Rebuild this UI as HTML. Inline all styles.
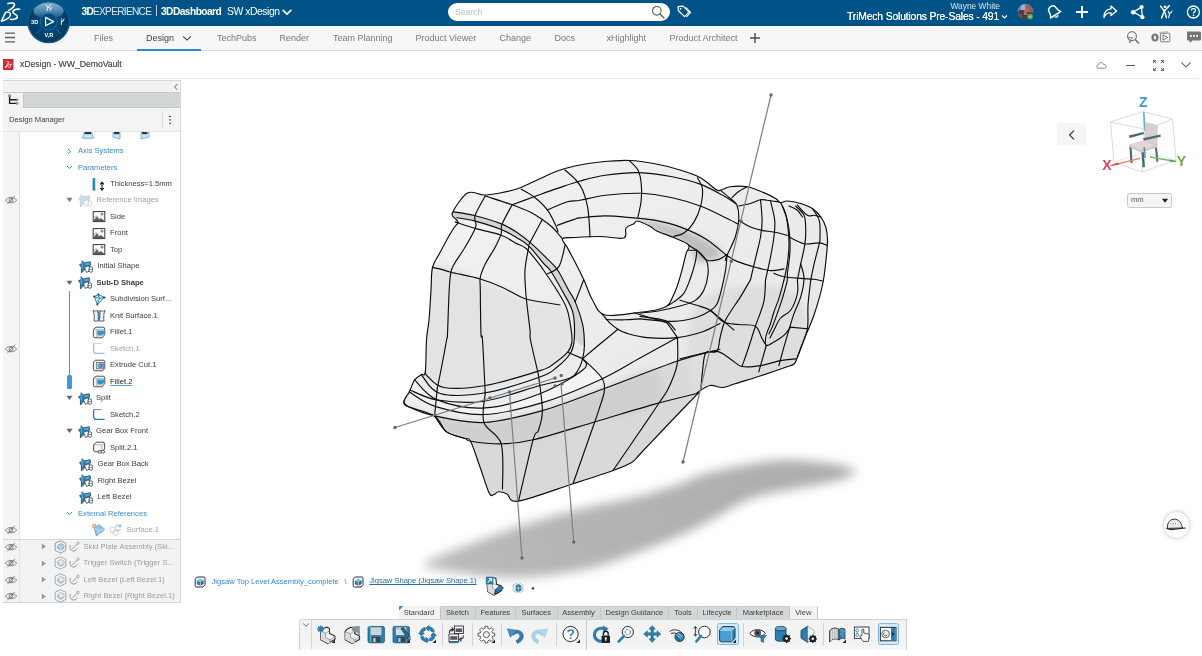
<!DOCTYPE html>
<html><head><meta charset="utf-8"><title>xDesign</title>
<style>
*{box-sizing:border-box;margin:0;padding:0}
body{opacity:.9999}
html,body{width:1202px;height:656px;overflow:hidden;background:#fff;font-family:"Liberation Sans",sans-serif;color:#3d3d3d}
.abs{position:absolute}
#topbar{position:absolute;left:0;top:0;width:1202px;height:26px;background:#005386}
#tabbar{position:absolute;left:0;top:26px;width:1202px;height:25px;background:#f7f7f7;border-bottom:1px solid #dcdcdc}
.tab{position:absolute;top:0;height:24px;line-height:24px;font-size:9px;color:#77797c;white-space:nowrap}
.tab.act{color:#3d3d3d}
#whead{position:absolute;left:0;top:51px;width:1202px;height:27px;background:#fff}
#panel{position:absolute;left:3px;top:80px;width:178px;height:523px;background:#fff;border:1px solid #d4d7d8;border-left:none}
.row{position:absolute;left:0;height:16px;line-height:16px;font-size:7.62px;white-space:nowrap;color:#3d3d3d}
.blue{color:#368ec4}
.gray{color:#a3a3a3}
.gray2{color:#9a9c9e}
</style></head><body>
<div id="topbar">
<svg class="abs" style="left:0;top:0" width="26" height="26" viewBox="0 0 26 26"><g fill="none" stroke="#fff" stroke-linecap="round" stroke-linejoin="round"><path d="M8 3.6 C10.6 2.6 15.2 2.6 14.4 5.2 C13.8 7.2 11.2 9 8.6 10.4" stroke-width="1.6"/><path d="M5.6 12.4 C9 11.4 11.2 12.8 10.4 15.2 C9.6 17.8 5.2 20.4 1.4 21.2 C3 18 4.4 15 5.6 12.4Z" stroke-width="1.5"/><path d="M19.6 9.3 C16 8.6 12.4 10 13 12.2 C13.6 14.2 17.8 14.8 17.4 17 C17 19 13.4 19.8 10.6 19.3" stroke-width="1.6"/></g></svg>
<svg class="abs" style="left:25px;top:-3px;z-index:5" width="48" height="50" viewBox="0 0 48 50">
<defs><radialGradient id="cg" cx="50%" cy="45%" r="55%"><stop offset="0" stop-color="#024e7e"/><stop offset="0.7" stop-color="#01426c"/><stop offset="1" stop-color="#013a60"/></radialGradient>
<linearGradient id="cg2" x1="0" y1="0" x2="0" y2="1"><stop offset="0" stop-color="#86b2d2"/><stop offset=".55" stop-color="#4f87ad"/><stop offset="1" stop-color="#1f5f8a" stop-opacity=".6"/></linearGradient>
<clipPath id="ccl"><circle cx="23.6" cy="24.9" r="19.6"/></clipPath></defs>
<circle cx="23.6" cy="24.9" r="21.4" fill="#0a5a8e"/>
<circle cx="23.6" cy="24.9" r="20" fill="url(#cg)"/>
<ellipse cx="23.6" cy="13.6" rx="15" ry="8.4" fill="url(#cg2)" clip-path="url(#ccl)"/>
<circle cx="23.6" cy="24.6" r="8.4" fill="#014a78" stroke="#1178b4" stroke-width=".7"/>
<g stroke="#1f86c4" stroke-width=".7"><path d="M11.4 12 L15.8 16.6"/><path d="M35.8 12 L31.4 16.6"/><path d="M11.4 36.8 L15.8 32.4"/><path d="M35.8 36.8 L31.4 32.4"/></g>
<path d="M20.6 20.4 L28.6 24.6 L20.6 28.8Z" fill="none" stroke="#fff" stroke-width="1.2" stroke-linejoin="round"/>
<g fill="#fff" font-family="Liberation Sans,sans-serif" font-weight="700" font-size="5.6px" text-anchor="middle"><text x="9.6" y="26.8">3D</text><text x="23.8" y="39.8">V,R</text></g>
<g stroke="#fff" stroke-width="1" fill="none" stroke-linecap="round"><path d="M21.4 8.2 L23 10.8 L25.4 7.8"/><path d="M23 10.8 L22 13.4"/><path d="M24.6 10.6 L25.6 12.4 L27 10.2 M25.6 12.4 L25 13.6" stroke-width=".8"/><path d="M36.4 23.4 L36.4 27.4 M37.6 24.6 L39 22"/></g>
<circle cx="36.4" cy="21.8" r=".6" fill="#fff"/>
</svg>
<div class="tt abs" style="left:81.5px;top:5px;font-size:10.2px;line-height:14px;color:#fff;white-space:nowrap;letter-spacing:-.75px"><b>3D</b><span style="opacity:.86">EXPERIENCE</span></div>
<div class="abs" style="left:155.5px;top:5px;width:1px;height:11px;background:#b9cfdf"></div>
<div class="tt abs" style="left:161px;top:5px;font-size:10.2px;line-height:14px;color:#fff;white-space:nowrap;letter-spacing:-.55px"><b>3DDashboard</b></div>
<div class="tt abs" style="left:227px;top:5px;font-size:10.4px;line-height:14px;color:#fff;white-space:nowrap;letter-spacing:-.46px">SW xDesign</div>
<svg class="abs" style="left:282px;top:9px" width="10" height="7" viewBox="0 0 10 7"><path d="M1.2 1.4 L5 5.2 L8.8 1.4" fill="none" stroke="#fff" stroke-width="1.7" stroke-linecap="round" stroke-linejoin="round"/></svg>
<div class="abs" style="left:448px;top:3px;width:222px;height:18px;border-radius:9px;background:#fff"></div>
<div class="abs" style="left:455px;top:5px;font-size:8.6px;line-height:14px;color:#b4bcc2">Search</div>
<svg class="abs" style="left:650px;top:4px" width="16" height="16" viewBox="0 0 16 16"><circle cx="6.8" cy="6.8" r="4.3" fill="none" stroke="#5b5d5e" stroke-width="1.1"/><path d="M10 10 L14 14" stroke="#5b5d5e" stroke-width="1.3" stroke-linecap="round"/></svg>
<svg class="abs" style="left:676px;top:4px" width="16" height="16" viewBox="0 0 16 16"><g fill="none" stroke="#fff" stroke-width="1.2" stroke-linejoin="round"><path d="M2 2.6 L7 2.2 L13 8.2 L8.6 12.6 L2.4 6.8Z"/><path d="M9.6 3.4 L14.6 8.4 L10.4 12.8"/></g><circle cx="4.6" cy="4.8" r=".9" fill="#fff"/></svg>
<div class="abs" style="right:202px;top:0px;font-size:8.4px;line-height:12px;color:#dbe6ee;white-space:nowrap">Wayne White</div>
<div class="abs" style="right:203px;top:9.5px;font-size:10.4px;line-height:14px;color:#fff;white-space:nowrap;letter-spacing:-.18px;text-shadow:0 0 .4px #fff">TriMech Solutions Pre-Sales - 491</div>
<svg class="abs" style="left:1001px;top:14px" width="7" height="6" viewBox="0 0 7 6"><path d="M1 1.5 L3.5 4 L6 1.5" fill="none" stroke="#fff" stroke-width="1.1"/></svg>
<svg class="abs" style="left:1016px;top:2px" width="20" height="20" viewBox="0 0 20 20"><defs><clipPath id="avc"><circle cx="9.6" cy="9.8" r="8"/></clipPath></defs><circle cx="9.6" cy="9.8" r="8" fill="#4a5a70"/><g clip-path="url(#avc)"><rect x="0" y="0" width="10" height="9" fill="#6f8aa6"/><rect x="10" y="1" width="9" height="9" fill="#7d6a72"/><rect x="3" y="8" width="8" height="11" fill="#3e4250"/><rect x="8" y="6" width="5" height="7" fill="#b06a5a"/><rect x="11" y="10" width="8" height="9" fill="#5a4650"/><rect x="5" y="3" width="4" height="5" fill="#9fb1c4"/><rect x="2" y="12" width="4" height="6" fill="#7a4a48"/></g><circle cx="14.2" cy="14.6" r="2.7" fill="#55b25b"/><path d="M12.9 14.6 L13.9 15.6 L15.6 13.7" fill="none" stroke="#d8f0d8" stroke-width=".7"/></svg>
<svg class="abs" style="left:1045px;top:3px" width="18" height="18" viewBox="0 0 18 18"><g transform="rotate(-32 9 9)" fill="none" stroke="#fff" stroke-linejoin="round"><path d="M9 2.6 C6 2.6 4.8 5 4.8 7.6 C4.8 10 3.8 11.2 2.8 12.2 H15.2 C14.2 11.2 13.2 10 13.2 7.6 C13.2 5 12 2.6 9 2.6Z" stroke-width="1.5"/><path d="M7.2 13.4 A1.9 1.9 0 0 0 10.8 13.4" stroke-width="1.3"/></g></svg>
<svg class="abs" style="left:1074px;top:4px" width="16" height="16" viewBox="0 0 16 16"><path d="M8 2 V14 M2 8 H14" stroke="#fff" stroke-width="1.9"/></svg>
<svg class="abs" style="left:1101px;top:3px" width="18" height="18" viewBox="0 0 18 18"><path d="M10 3 L15.6 8 L10 12.6 V10 C6.6 9.6 4.2 11.4 3 14.6 C2.6 9.6 5.4 6 10 5.8Z" fill="none" stroke="#fff" stroke-width="1.3" stroke-linejoin="round"/></svg>
<svg class="abs" style="left:1129px;top:3px" width="18" height="18" viewBox="0 0 18 18"><g stroke="#fff" stroke-width="1.3" fill="none"><path d="M4.4 9 L12.4 4.2 L13.4 14 Z"/></g><circle cx="4.2" cy="9.2" r="2.3" fill="#fff"/><circle cx="12.6" cy="4" r="2.1" fill="#fff"/><circle cx="13.4" cy="14.2" r="2.1" fill="#fff"/></svg>
<svg class="abs" style="left:1157px;top:3px" width="18" height="18" viewBox="0 0 18 18"><g stroke="#fff" stroke-width="1.5" fill="none" stroke-linecap="round"><path d="M3.6 3.2 L7.4 8 L12.4 2.6"/><path d="M7.4 8 L4.6 15"/><path d="M8 9.4 L9.4 14.6"/><path d="M11.2 8.6 L12.6 10.8 L15 8.4 M12.6 10.8 L11.6 14.6" stroke-width="1.1"/></g><circle cx="8" cy="3.8" r="1.3" fill="#fff"/></svg>
<svg class="abs" style="left:1185px;top:3px" width="18" height="18" viewBox="0 0 18 18"><circle cx="8.4" cy="9" r="6" fill="none" stroke="#fff" stroke-width="1.3"/><path d="M6.4 7.4 C6.4 5 10.6 5 10.6 7.4 C10.6 8.8 8.5 8.9 8.5 10.6" fill="none" stroke="#fff" stroke-width="1.3"/><circle cx="8.5" cy="12.3" r=".85" fill="#fff"/></svg>

</div>

<div id="tabbar">
<svg class="abs" style="left:4px;top:5px" width="12" height="13" viewBox="0 0 12 13"><path d="M1 2.2 H11 M1 6.5 H11 M1 10.8 H11" stroke="#5a5c5e" stroke-width="1.3"/></svg>
<div class="tab" style="left:94px">Files</div>
<div class="tab act" style="left:146px">Design</div>
<svg class="abs" style="left:182px;top:9px" width="10" height="7" viewBox="0 0 10 7"><path d="M1 1.4 L5 5 L9 1.4" fill="none" stroke="#4a4c4e" stroke-width="1.1"/></svg>
<div class="abs" style="left:137px;top:23px;width:64px;height:2px;background:#2b89cc"></div>
<div class="tab" style="left:217px">TechPubs</div>
<div class="tab" style="left:279.5px">Render</div>
<div class="tab" style="left:333px">Team Planning</div>
<div class="tab" style="left:415.5px">Product Viewer</div>
<div class="tab" style="left:499.5px">Change</div>
<div class="tab" style="left:554.5px">Docs</div>
<div class="tab" style="left:606.5px">xHighlight</div>
<div class="tab" style="left:669.5px">Product Architect</div>
<svg class="abs" style="left:749px;top:6px" width="12" height="12" viewBox="0 0 12 12"><path d="M6 1 V11 M1 6 H11" stroke="#4a4c4e" stroke-width="1.4"/></svg>
<svg class="abs" style="left:1124px;top:3px" width="18" height="18" viewBox="0 0 18 18"><circle cx="8" cy="7.2" r="4.4" fill="none" stroke="#6a6c6e" stroke-width="1.1"/><path d="M11.2 10.4 L15 14.4" stroke="#6a6c6e" stroke-width="1.5"/><path d="M3.6 8.6 H8.4 L6.6 10.6 V13.4 L5.4 13.4 V10.6Z" fill="#f7f7f7" stroke="#6a6c6e" stroke-width=".8"/></svg>
<svg class="abs" style="left:1150px;top:3px" width="24" height="18" viewBox="0 0 24 18"><ellipse cx="5" cy="8.6" rx="3.6" ry="4" fill="#77797b"/><ellipse cx="5" cy="8.6" rx="1" ry="2.2" fill="#f7f7f7"/><rect x="10.4" y="4.2" width="9.4" height="8.6" rx="1" fill="#f7f7f7" stroke="#77797b" stroke-width="1"/><path d="M9 3.4 L18 2.8" stroke="#9a9c9e" stroke-width=".8"/><path d="M13 5.8 L17.6 8.5 L13 11.2Z" fill="none" stroke="#77797b" stroke-width="1"/></svg>
<svg class="abs" style="left:1185px;top:4px" width="18" height="16" viewBox="0 0 18 16"><path d="M2 1.6 H15 Q16 1.6 16 2.6 V9.4 Q16 10.4 15 10.4 H7.4 L4.6 13.2 V10.4 H3 Q2 10.4 2 9.4Z" fill="#737577"/><g fill="#f7f7f7"><rect x="5" y="5" width="1.8" height="1.8"/><rect x="8.1" y="5" width="1.8" height="1.8"/><rect x="11.2" y="5" width="1.8" height="1.8"/></g></svg>
</div>
<div id="whead">
<svg class="abs" style="left:3px;top:8px" width="11" height="12" viewBox="0 0 11 12"><rect x="0" y="0" width="10.4" height="11" fill="#d8262c"/><g fill="none" stroke="#fff" stroke-width=".9" stroke-linecap="round"><path d="M4 2.6 C6 2 6.6 3.2 5 4.6"/><path d="M5 4.6 C6.6 4.4 6 6 4.6 7 L2 8.8 L5 4.6"/><path d="M8.6 5.2 C7.4 4.8 6.8 5.6 7.4 6.4 C8 7.2 7.8 8.2 5.8 8.2"/></g></svg>
<div class="abs" style="left:20px;top:6px;font-size:8.7px;line-height:14px;color:#5b5d5f;white-space:nowrap;letter-spacing:-.05px;text-shadow:0 0 .3px #5b5d5f" id="wt">xDesign - WW_DemoVault</div>
<svg class="abs" style="left:1095px;top:8px" width="14" height="12" viewBox="0 0 14 12"><path d="M3.4 9.2 C1 9.2 1 6.4 3.2 6.2 C3.6 3 8 2.6 8.8 5.6 C11.6 5.4 12 9.2 9.6 9.2Z" fill="none" stroke="#77797b" stroke-width=".9"/></svg>
<div class="abs" style="left:1126px;top:13.5px;width:9px;height:1.2px;background:#5a5c5e"></div>
<svg class="abs" style="left:1152px;top:8px" width="13" height="13" viewBox="0 0 13 13"><g stroke="#5a5c5e" stroke-width="1" fill="none"><path d="M1.6 4 V1.6 H4 M1.6 1.6 L4.2 4.2"/><path d="M9 1.6 H11.4 V4 M11.4 1.6 L8.8 4.2"/><path d="M1.6 9 V11.4 H4 M1.6 11.4 L4.2 8.8"/><path d="M9 11.4 H11.4 V9 M11.4 11.4 L8.8 8.8"/></g></svg>
<svg class="abs" style="left:1180px;top:10px" width="12" height="8" viewBox="0 0 12 8"><path d="M1.4 1.6 L6 5.8 L10.6 1.6" fill="none" stroke="#5a5c5e" stroke-width="1.1"/></svg>
<div class="abs" style="left:3px;top:27px;width:1196px;height:1px;background:#ebebeb"></div>
</div>
<!--PANEL--><svg width="0" height="0" style="position:absolute"><defs>
<symbol id="i-feat" viewBox="0 0 14 14"><path d="M.5 4.6 L2.8 3.9 L3.2 .7 L5.2 3 L11.2 1.7 L11.6 5 L9.4 7 L6 9 L4.8 10.6 L2.4 13 L2.4 7.4Z" fill="#2b7fb2" stroke="#1d4a68" stroke-width=".8" stroke-linejoin="round"/><path d="M3.3 1.8 V8.4" stroke="#6fb6de" stroke-width=".9"/><path d="M5.8 3.6 L10.6 2.5 L10.9 4.6 L7.6 5.6Z" fill="#58a8d8"/><path d="M5.4 7.6 L8 6.2 L10.6 6 L10 11.2 L7.6 12.4Z" fill="#fff" stroke="#2b3a44" stroke-width=".8" stroke-linejoin="round"/><rect x="10.2" y="6.8" width="3.4" height="5.4" rx="1.5" fill="#fff" stroke="#2b3a44" stroke-width=".8"/><path d="M10.6 9.4 H13" stroke="#2b3a44" stroke-width=".6"/></symbol>
<symbol id="i-featg" viewBox="0 0 14 14"><g opacity=".42"><path d="M.5 4.6 L2.8 3.9 L3.2 .7 L5.2 3 L11.2 1.7 L11.6 5 L9.4 7 L6 9 L4.8 10.6 L2.4 13 L2.4 7.4Z" fill="#7fb0d0" stroke="#6b8496" stroke-width=".8" stroke-linejoin="round"/><path d="M5.4 7.6 L8 6.2 L10.6 6 L10 11.2 L7.6 12.4Z" fill="#fff" stroke="#7a848a" stroke-width=".8"/><rect x="10.2" y="6.8" width="3.4" height="5.4" rx="1.5" fill="#fff" stroke="#7a848a" stroke-width=".8"/></g></symbol>
<symbol id="i-subd" viewBox="0 0 14 13"><path d="M2.2 3.6 L6.4 1.4 L12.4 4.4 L5.4 11.4Z" fill="#d9ecf6" stroke="#2e82b4" stroke-width="1"/><path d="M2.2 3.6 L7.4 5.4 L12.4 4.4 M6.4 1.4 L7.4 5.4 L5.4 11.4" fill="none" stroke="#2e82b4" stroke-width=".9"/><g fill="#2b3a44"><circle cx="2.2" cy="3.6" r="1"/><circle cx="6.4" cy="1.4" r="1"/><circle cx="12.4" cy="4.4" r="1"/><circle cx="5.4" cy="11.4" r="1"/></g></symbol>
<symbol id="i-knit" viewBox="0 0 14 13"><path d="M1 1.4 C2.6 2.4 4.4 2.4 6 1.4 L6.6 12 H2 C2.6 8 2.4 5 1 1.4Z" fill="#f2f2f2" stroke="#3a3f44" stroke-width=".8"/><path d="M13 1.4 C11.4 2.4 9.6 2.4 8 1.4 L7.4 12 H12 C11.4 8 11.6 5 13 1.4Z" fill="#f2f2f2" stroke="#3a3f44" stroke-width=".8"/><path d="M7.6 2 L6 3.6 L8 5 L6 6.6 L8 8 L6 9.6 L7.6 11.4" fill="none" stroke="#2e82b4" stroke-width="1.1"/></symbol>
<symbol id="i-fillet" viewBox="0 0 14 13"><path d="M1.4 3.4 L4 1.2 H11 Q12.8 1.2 12.8 3 V8.4 L10.2 11.8 H3 Q1.4 11.8 1.4 10.2Z" fill="#f4f4f4" stroke="#3a3f44" stroke-width=".9" stroke-linejoin="round"/><path d="M5.2 3.6 H11 Q12.2 3.6 12.2 4.8 V7.6 L10.6 9.2 H6.4 Q5.2 9.2 5.2 8Z" fill="#3b93c6"/><path d="M5.2 3.6 H11 Q12.2 3.6 12.2 4.6 V5 H5.2Z" fill="#8fcdee"/><path d="M1.6 3.6 H4.8 V10.6 M4.8 10.6 L3.4 11.6 M5 9.8 H10.4" fill="none" stroke="#8a8f94" stroke-width=".6"/></symbol>
<symbol id="i-sketch" viewBox="0 0 14 13"><path d="M1.6 1.6 V8.4 Q1.6 11.4 4.6 11.4 H12.6" fill="none" stroke="#2f7fae" stroke-width="1.3"/><path d="M1.6 1.6 H9.6" stroke="#2f7fae" stroke-width=".8"/></symbol>
<symbol id="i-sketchg" viewBox="0 0 14 13"><path d="M1.6 1.6 V8.4 Q1.6 11.4 4.6 11.4 H12.6" fill="none" stroke="#93c1e2" stroke-width="1.3"/><path d="M1.6 1.6 H9.6" stroke="#a9cde8" stroke-width=".8"/></symbol>
<symbol id="i-cut" viewBox="0 0 14 13"><path d="M1.4 3 L3.6 1.2 H11.2 Q12.8 1.2 12.8 2.8 V9.4 L10.6 11.8 H3 Q1.4 11.8 1.4 10.2Z" fill="#f0f0f0" stroke="#3a3f44" stroke-width=".9" stroke-linejoin="round"/><rect x="4.6" y="3.4" width="7" height="6.4" fill="#c9ccce" stroke="#55595d" stroke-width=".6"/><path d="M7 4.6 H10.6 V8.8 H7 L5.8 6.8Z" fill="#2e82b4"/><path d="M6 6.2 L8.4 6 L8.4 7.6Z" fill="#cfe6f3"/></symbol>
<symbol id="i-split" viewBox="0 0 14 13"><path d="M1.6 3.6 L4.6 1.2 H11 Q12.6 1.2 12.6 2.8 V8 L9.8 10.8 H3.2 Q1.6 10.8 1.6 9.2Z" fill="#f6f6f6" stroke="#3a3f44" stroke-width=".9" stroke-linejoin="round"/><path d="M1.8 3.8 H8.6 Q9.8 3.8 9.8 5 V10.6 M9.8 4.4 L12.4 2" fill="none" stroke="#8a8f93" stroke-width=".6"/><rect x="6.2" y="9.4" width="3.6" height="2.6" rx="1.3" fill="#fff" stroke="#24282b" stroke-width=".8"/><rect x="9" y="9.4" width="3.6" height="2.6" rx="1.3" fill="#fff" stroke="#24282b" stroke-width=".8"/></symbol>
<symbol id="i-img" viewBox="0 0 14 13"><rect x="1.2" y="1.6" width="11.6" height="10" fill="#fdfdfd" stroke="#33373a" stroke-width="1"/><path d="M1.8 10 L4.8 6.6 L7.2 9.2 L8.8 8 L12.2 10.6 V11 H1.8Z" fill="#5a5f63"/><path d="M1.8 8.2 L4.4 5.8 L6.6 8" fill="none" stroke="#6a6f73" stroke-width=".6"/><circle cx="10" cy="4.2" r="1" fill="none" stroke="#33373a" stroke-width=".7"/></symbol>
<symbol id="i-param" viewBox="0 0 14 13"><rect x=".6" y=".2" width="2.6" height="12.4" fill="#2e82b4"/><path d="M3.2 1 H6.4 M3.2 12 H6.4" stroke="#9aa0a4" stroke-width=".6" stroke-dasharray="1 .8"/><path d="M4.6 3.6 H5.6 M4.6 6.2 H5.6" stroke="#c0c4c7" stroke-width=".6"/><path d="M10 4.4 V12 M8.2 6.4 L10 4.2 L11.8 6.4 M8.2 10 L10 12.2 L11.8 10" fill="none" stroke="#1f2326" stroke-width="1.1"/></symbol>
<symbol id="i-eye" viewBox="0 0 14 10"><path d="M1.4 5.2 C3.6 1.6 10.4 1.6 12.6 5.2 C10.4 8.6 3.6 8.6 1.4 5.2Z" fill="none" stroke="#6e7174" stroke-width=".85"/><circle cx="7" cy="5.1" r="1.9" fill="none" stroke="#6e7174" stroke-width=".85"/><path d="M3.4 9.2 L10.8 .8" stroke="#6e7174" stroke-width=".85"/></symbol>
<symbol id="i-prod" viewBox="0 0 13 14"><path d="M6.4 .8 L11.8 3.2 V10.4 L6.4 13.2 L1.2 10.4 V3.2Z" fill="#f4f5f6" stroke="#8b9094" stroke-width=".9" stroke-linejoin="round"/><path d="M3.6 5 L6.8 3.4 L10 5 V8.6 L6.8 10.4 L3.6 8.6Z" fill="#9fc6dd" stroke="#8b9094" stroke-width=".5"/><path d="M3.6 5 L6.8 6.6 L10 5 M6.8 6.6 V10.4" fill="none" stroke="#e8f2f8" stroke-width=".6"/></symbol>
<symbol id="i-prodg" viewBox="0 0 13 14"><path d="M6.4 .8 L11.8 3.2 V10.4 L6.4 13.2 L1.2 10.4 V3.2Z" fill="#f4f5f6" stroke="#9a9ea1" stroke-width=".9" stroke-linejoin="round"/><path d="M3.6 5 L6.8 3.4 L10 5 V8.6 L6.8 10.4 L3.6 8.6Z" fill="#dfe8ee" stroke="#9a9ea1" stroke-width=".6"/><path d="M5.4 6 A2 2 0 1 0 8.6 7.8" fill="none" stroke="#9a9ea1" stroke-width=".8"/></symbol>
<symbol id="i-link" viewBox="0 0 12 12"><path d="M2.2 4.2 C1.4 7.4 3 10 5.8 10 C7.6 10 8.8 8.8 9 7.4" fill="none" stroke="#909498" stroke-width="1"/><path d="M4.4 8 L9.2 3.2" stroke="#909498" stroke-width="1"/><circle cx="10" cy="2.2" r="1.2" fill="none" stroke="#909498" stroke-width=".7"/></symbol>
<symbol id="i-plane" viewBox="0 0 14 10"><path d="M3 1 H11 L13 8.6 H1Z" fill="#cfe6f5" stroke="#4d9fd0" stroke-width=".7"/></symbol>
</defs></svg>
<div id="panel">
<div class="abs" style="left:0;top:0;width:177px;height:11px;background:#f3f3f3"></div>
<svg class="abs" style="left:170px;top:2px" width="6" height="8" viewBox="0 0 6 8"><path d="M4.4 1 L1.6 4 L4.4 7" fill="none" stroke="#55585a" stroke-width=".9"/></svg>
<div class="abs" style="left:0;top:11px;width:177px;height:16px;background:#d2d6d7;border-top:1px solid #c6cacb;border-bottom:1px solid #c6cacb"></div>
<div class="abs" style="left:0;top:11px;width:21px;height:16px;background:#f3f3f3;border-top:1px solid #c6cacb;border-right:1px solid #c6cacb"></div>
<svg class="abs" style="left:4px;top:13px" width="12" height="12" viewBox="0 0 12 12"><path d="M2.6 2.4 V9.4 H9.6 M2.6 5.8 H9.6" fill="none" stroke="#222" stroke-width="1.4"/><circle cx="2.6" cy="1.8" r="1.1" fill="#fff" stroke="#222" stroke-width=".7"/><circle cx="10" cy="5.8" r=".9" fill="#fff" stroke="#222" stroke-width=".6"/><circle cx="10" cy="9.4" r=".9" fill="#fff" stroke="#222" stroke-width=".6"/></svg>
<div class="abs" style="left:0;top:27px;width:177px;height:24px;background:#f4f4f4;border-bottom:1px solid #e4e4e4;z-index:3"></div>
<div class="row" style="left:6px;top:31px;color:#3d3d3d;z-index:4" id="dm">Design Manager</div>
<div class="abs" style="left:158.5px;top:30px;width:1px;height:17px;background:#dcdcdc;z-index:4"></div>
<div class="abs" style="left:166.2px;top:34.6px;width:1.6px;height:1.6px;background:#444;box-shadow:0 3.4px 0 #444,0 6.8px 0 #444;z-index:4"></div>
<div class="abs" style="left:0;top:51px;width:17px;height:470px;background:#f5f5f5;border-right:1px solid #e2e2e2"></div>
<div class="abs" style="left:0;top:458px;width:177px;height:63px;background:#f1f3f4;border-top:1px solid #d4d7d8"></div>
<div class="abs" style="left:16px;top:458px;width:1px;height:63px;background:#e2e4e5"></div>
<div class="abs" style="left:66px;top:210px;width:1.4px;height:85px;background:#3e97d6"></div>
<div class="abs" style="left:64.4px;top:294px;width:4.6px;height:14px;border-radius:1.5px;background:#3e97d6"></div>
<svg class="abs" style="left:78px;top:48px" width="14" height="10" viewBox="0 0 14 10"><path d="M3.4 3 H10.6 L12.6 9.2 H1.4Z" fill="#cfe6f5" stroke="#4d9fd0" stroke-width=".7"/><rect x="3.6" y="3" width="6.6" height="2.2" fill="#2b3a44"/></svg>
<svg class="abs" style="left:108px;top:48px" width="12" height="12" viewBox="0 0 12 12"><path d="M2 3 L9 3 V10 L2 8Z" fill="#cfe6f5" stroke="#4d9fd0" stroke-width=".7"/><rect x="3" y="3" width="5.4" height="2.2" fill="#2b3a44"/></svg>
<svg class="abs" style="left:136px;top:48px" width="12" height="12" viewBox="0 0 12 12"><path d="M2 3 L10 3 V8 L2 10Z" fill="#cfe6f5" stroke="#4d9fd0" stroke-width=".7"/><rect x="3" y="3" width="5.4" height="2.2" fill="#2b3a44"/></svg>
<svg class="abs" style="left:63.0px;top:66.5px" width="7" height="7" viewBox="0 0 7 7"><path d="M2 1 L4.6 3.5 L2 6" fill="none" stroke="#368ec4" stroke-width="1"/></svg>
<div class="row blue" style="left:75.0px;top:62.0px;">Axis Systems</div>
<svg class="abs" style="left:63.0px;top:83.0px" width="7" height="7" viewBox="0 0 7 7"><path d="M1 2 L3.5 4.4 L6 2" fill="none" stroke="#368ec4" stroke-width="1"/></svg>
<div class="row blue" style="left:75.0px;top:78.5px;">Parameters</div>
<svg class="abs" style="left:89.0px;top:96.5px" width="14" height="13"><use href="#i-param"/></svg>
<div class="row " style="left:107.0px;top:95.0px;">Thickness=1.5mm</div>
<svg class="abs" style="left:63.0px;top:116.4px" width="7" height="6" viewBox="0 0 7 6"><path d="M.4 .8 H6.6 L3.5 5Z" fill="#77797c"/></svg>
<svg class="abs" style="left:74.7px;top:112.8px" width="14" height="14"><use href="#i-featg"/></svg>
<div class="row gray" style="left:93.5px;top:111.4px;">Reference Images</div>
<svg class="abs" style="left:1.0px;top:114.4px" width="14" height="10"><use href="#i-eye"/></svg>
<svg class="abs" style="left:89.0px;top:129.4px" width="14" height="13"><use href="#i-img"/></svg>
<div class="row " style="left:107.0px;top:127.9px;">Side</div>
<svg class="abs" style="left:89.0px;top:145.9px" width="14" height="13"><use href="#i-img"/></svg>
<div class="row " style="left:107.0px;top:144.4px;">Front</div>
<svg class="abs" style="left:89.0px;top:162.4px" width="14" height="13"><use href="#i-img"/></svg>
<div class="row " style="left:107.0px;top:160.9px;">Top</div>
<svg class="abs" style="left:75.9px;top:178.8px" width="14" height="14"><use href="#i-feat"/></svg>
<div class="row " style="left:94.5px;top:177.4px;">Initial Shape</div>
<svg class="abs" style="left:63.0px;top:198.8px" width="7" height="6" viewBox="0 0 7 6"><path d="M.4 .8 H6.6 L3.5 5Z" fill="#66696c"/></svg>
<svg class="abs" style="left:74.7px;top:195.2px" width="14" height="14"><use href="#i-feat"/></svg>
<div class="row " style="left:93.5px;top:193.8px;"><b>Sub-D Shape</b></div>
<svg class="abs" style="left:89.0px;top:211.8px" width="14" height="13"><use href="#i-subd"/></svg>
<div class="row " style="left:107.0px;top:210.3px;">Subdivision Surf...</div>
<svg class="abs" style="left:89.0px;top:228.3px" width="14" height="13"><use href="#i-knit"/></svg>
<div class="row " style="left:107.0px;top:226.8px;">Knit Surface.1</div>
<svg class="abs" style="left:89.0px;top:244.8px" width="14" height="13"><use href="#i-fillet"/></svg>
<div class="row " style="left:107.0px;top:243.3px;">Fillet.1</div>
<svg class="abs" style="left:89.0px;top:261.3px" width="14" height="13"><use href="#i-sketchg"/></svg>
<div class="row gray" style="left:107.0px;top:259.8px;">Sketch.1</div>
<svg class="abs" style="left:1.0px;top:262.8px" width="14" height="10"><use href="#i-eye"/></svg>
<svg class="abs" style="left:89.0px;top:277.7px" width="14" height="13"><use href="#i-cut"/></svg>
<div class="row " style="left:107.0px;top:276.2px;">Extrude Cut.1</div>
<svg class="abs" style="left:89.0px;top:294.2px" width="14" height="13"><use href="#i-fillet"/></svg>
<div class="row " style="left:107.0px;top:292.7px;text-decoration:underline;text-decoration-color:#58a8e0;text-decoration-thickness:.8px;text-underline-offset:1px;color:#222">Fillet.2</div>
<svg class="abs" style="left:63.0px;top:314.2px" width="7" height="6" viewBox="0 0 7 6"><path d="M.4 .8 H6.6 L3.5 5Z" fill="#66696c"/></svg>
<svg class="abs" style="left:74.7px;top:310.6px" width="14" height="14"><use href="#i-feat"/></svg>
<div class="row " style="left:93.0px;top:309.2px;">Split</div>
<svg class="abs" style="left:89.0px;top:327.2px" width="14" height="13"><use href="#i-sketch"/></svg>
<div class="row " style="left:107.0px;top:325.7px;">Sketch.2</div>
<svg class="abs" style="left:63.0px;top:347.2px" width="7" height="6" viewBox="0 0 7 6"><path d="M.4 .8 H6.6 L3.5 5Z" fill="#66696c"/></svg>
<svg class="abs" style="left:74.7px;top:343.6px" width="14" height="14"><use href="#i-feat"/></svg>
<div class="row " style="left:93.0px;top:342.2px;">Gear Box Front</div>
<svg class="abs" style="left:89.0px;top:360.1px" width="14" height="13"><use href="#i-split"/></svg>
<div class="row " style="left:107.0px;top:358.6px;">Split.2.1</div>
<svg class="abs" style="left:75.9px;top:376.5px" width="14" height="14"><use href="#i-feat"/></svg>
<div class="row " style="left:94.5px;top:375.1px;">Gear Box Back</div>
<svg class="abs" style="left:75.9px;top:393.0px" width="14" height="14"><use href="#i-feat"/></svg>
<div class="row " style="left:94.5px;top:391.6px;">Right Bezel</div>
<svg class="abs" style="left:75.9px;top:409.5px" width="14" height="14"><use href="#i-feat"/></svg>
<div class="row " style="left:94.5px;top:408.1px;">Left Bezel</div>
<svg class="abs" style="left:63.0px;top:429.1px" width="7" height="7" viewBox="0 0 7 7"><path d="M1 2 L3.5 4.4 L6 2" fill="none" stroke="#368ec4" stroke-width="1"/></svg>
<div class="row blue" style="left:75.0px;top:424.6px;">External References</div>
<svg class="abs" style="left:1.0px;top:444.0px" width="14" height="10"><use href="#i-eye"/></svg>
<div class="row gray" style="left:123.5px;top:441.0px;">Surface.1</div>
<svg class="abs" style="left:88px;top:442.0px" width="15" height="14" viewBox="0 0 15 14"><path d="M3 4.4 L8 1.8 L14 6.4 L7.8 11 L5.4 13 Z" fill="#8cc4e4" stroke="#4a8db8" stroke-width=".6"/><path d="M3 4.4 L7.6 7.6 L7.8 11 M7.6 7.6 L14 6.4" fill="none" stroke="#e6f3fa" stroke-width=".7"/><circle cx="3" cy="2.8" r="1.7" fill="none" stroke="#e88a3c" stroke-width=".8"/><path d="M1.6 4.2 L4.6 1.2" stroke="#e88a3c" stroke-width=".8"/></svg>
<svg class="abs" style="left:105px;top:442.0px" width="14" height="14" viewBox="0 0 14 14"><circle cx="4.6" cy="7" r="2.8" fill="none" stroke="#c9ccce" stroke-width=".9"/><circle cx="7.6" cy="9.6" r="2.8" fill="none" stroke="#c9ccce" stroke-width=".9"/><path d="M7.2 4.4 A3 3 0 0 1 12.6 3.4 M12.8 1.4 V3.8 H10.4 M12.6 6 A3 3 0 0 1 8 6.6" fill="none" stroke="#7fb4d6" stroke-width="1"/></svg>
<svg class="abs" style="left:1.0px;top:460.5px" width="14" height="10"><use href="#i-eye"/></svg>
<svg class="abs" style="left:38.0px;top:462.0px" width="6" height="7" viewBox="0 0 6 7"><path d="M.8 .4 V6.6 L5 3.5Z" fill="#9a9c9e"/></svg>
<svg class="abs" style="left:50.5px;top:458.5px" width="13" height="14"><use href="#i-prod"/></svg>
<svg class="abs" style="left:65px;top:459.5px" width="12" height="12"><use href="#i-link"/></svg>
<div class="row gray2" style="left:80.5px;top:457.5px;">Skid Plate Assembly (Ski...</div>
<svg class="abs" style="left:1.0px;top:477.0px" width="14" height="10"><use href="#i-eye"/></svg>
<svg class="abs" style="left:38.0px;top:478.5px" width="6" height="7" viewBox="0 0 6 7"><path d="M.8 .4 V6.6 L5 3.5Z" fill="#9a9c9e"/></svg>
<svg class="abs" style="left:50.5px;top:475.0px" width="13" height="14"><use href="#i-prodg"/></svg>
<svg class="abs" style="left:65px;top:476.0px" width="12" height="12"><use href="#i-link"/></svg>
<div class="row gray2" style="left:80.5px;top:474.0px;">Trigger Switch (Trigger S...</div>
<svg class="abs" style="left:1.0px;top:493.5px" width="14" height="10"><use href="#i-eye"/></svg>
<svg class="abs" style="left:38.0px;top:495.0px" width="6" height="7" viewBox="0 0 6 7"><path d="M.8 .4 V6.6 L5 3.5Z" fill="#9a9c9e"/></svg>
<svg class="abs" style="left:50.5px;top:491.5px" width="13" height="14"><use href="#i-prodg"/></svg>
<svg class="abs" style="left:65px;top:492.5px" width="12" height="12"><use href="#i-link"/></svg>
<div class="row gray2" style="left:80.5px;top:490.5px;">Left Bezel (Left Bezel.1)</div>
<svg class="abs" style="left:1.0px;top:510.0px" width="14" height="10"><use href="#i-eye"/></svg>
<svg class="abs" style="left:38.0px;top:511.5px" width="6" height="7" viewBox="0 0 6 7"><path d="M.8 .4 V6.6 L5 3.5Z" fill="#9a9c9e"/></svg>
<svg class="abs" style="left:50.5px;top:508.0px" width="13" height="14"><use href="#i-prodg"/></svg>
<svg class="abs" style="left:65px;top:509.0px" width="12" height="12"><use href="#i-link"/></svg>
<div class="row gray2" style="left:80.5px;top:507.0px;">Right Bezel (Right Bezel.1)</div>
</div><!--/PANEL-->
<!--VIEW--><svg class="abs" style="left:0;top:79px" width="1202" height="577" viewBox="0 79 1202 577">
<defs><filter id="sb" x="-20%" y="-40%" width="140%" height="180%"><feGaussianBlur stdDeviation="5.5"/></filter>
<linearGradient id="bg1" x1="0" y1="0" x2="1" y2="1"><stop offset="0" stop-color="#f3f3f3"/><stop offset=".5" stop-color="#ececec"/><stop offset="1" stop-color="#e2e2e2"/></linearGradient>
<linearGradient id="shg" gradientUnits="userSpaceOnUse" x1="420" y1="570" x2="850" y2="470"><stop offset="0" stop-color="#bcbcbc"/><stop offset=".5" stop-color="#b2b2b2"/><stop offset="1" stop-color="#acacac"/></linearGradient>
<filter id="sb2"><feGaussianBlur stdDeviation="3"/></filter>
<clipPath id="bodyclip"><path d="M489.2 493.1 C486.9 488.5 483.1 475.6 480.0 467.0 C476.9 458.4 473.1 445.9 470.6 441.2 C468.1 436.4 469.2 440.1 465.2 438.5 C461.2 436.9 451.7 435.7 446.6 431.9 C441.5 428.1 441.0 420.1 434.6 415.9 C428.2 411.7 413.1 409.1 408.0 406.6 C402.9 404.2 403.8 403.6 404.0 401.2 C404.2 398.8 407.5 395.4 409.3 391.9 C411.1 388.3 412.6 382.8 414.6 379.9 C416.6 377.0 419.5 375.9 421.3 374.6 C423.1 373.3 424.4 377.8 425.3 372.0 C426.2 366.2 425.9 348.7 426.5 340.0 C427.1 331.3 428.2 328.3 429.0 320.0 C429.8 311.7 430.4 298.8 431.0 290.0 C431.6 281.2 431.0 273.8 432.5 267.5 C434.0 261.2 436.7 258.8 440.0 252.5 C443.3 246.2 449.5 235.0 452.5 230.0 C455.5 225.0 457.5 224.4 458.0 222.5 C458.5 220.6 456.4 220.4 455.5 218.8 C454.6 217.1 450.5 216.8 452.5 212.5 C454.5 208.2 462.3 195.9 467.5 193.0 C472.7 190.1 478.3 195.0 483.8 195.0 C489.2 195.0 494.4 194.0 500.0 193.0 C505.6 192.0 511.7 190.8 517.5 188.8 C523.3 186.8 528.3 184.0 535.0 181.0 C541.7 178.0 550.8 173.5 557.5 171.0 C564.2 168.5 567.9 167.5 575.0 166.0 C582.1 164.5 590.8 162.9 600.0 162.0 C609.2 161.1 620.8 160.2 630.0 160.5 C639.2 160.8 646.7 162.2 655.0 163.8 C663.3 165.3 672.5 167.7 680.0 170.0 C687.5 172.3 694.2 174.4 700.0 177.5 C705.8 180.6 711.7 186.6 715.0 188.8 C718.3 190.9 717.5 190.8 720.0 190.5 C722.5 190.2 725.5 187.4 730.0 186.8 C734.5 186.2 741.4 185.8 747.0 186.8 C752.6 187.8 759.0 190.7 763.8 192.6 C768.6 194.5 772.8 196.8 775.6 198.5 C778.4 200.2 778.7 202.3 780.6 202.7 C782.5 203.1 783.9 200.9 787.3 201.0 C790.6 201.1 796.5 202.2 800.7 203.5 C804.9 204.8 809.0 206.3 812.4 208.6 C815.8 210.8 818.6 213.9 820.8 217.0 C823.0 220.1 824.7 223.1 825.8 227.0 C826.9 230.9 827.5 234.9 827.5 240.4 C827.5 245.9 826.8 252.6 826.0 260.0 C825.2 267.4 824.5 275.8 822.5 285.0 C820.5 294.2 816.8 306.6 814.0 315.0 C811.2 323.4 808.5 328.4 805.7 335.4 C802.9 342.4 799.4 352.4 797.4 357.2 C795.4 362.0 796.1 362.3 794.0 364.0 C791.9 365.7 790.7 365.5 785.0 367.5 C779.3 369.5 768.3 373.3 760.0 376.0 C751.7 378.7 741.2 381.8 735.0 383.8 C728.8 385.7 726.7 387.2 722.5 387.5 C718.3 387.8 714.2 384.7 710.0 385.5 C705.8 386.3 699.5 391.2 697.5 392.5 C695.5 393.8 701.1 389.9 698.2 393.2 C695.3 396.4 686.4 405.4 680.0 412.0 C673.6 418.6 666.7 425.9 660.0 433.0 C653.3 440.1 644.3 449.6 639.6 454.5 C634.9 459.4 636.0 459.8 631.6 462.5 C627.2 465.2 622.8 466.9 613.0 470.5 C603.2 474.1 588.8 478.7 573.0 483.8 C557.2 488.9 529.5 499.4 518.5 501.1 C507.5 502.8 510.3 495.6 507.0 494.0 C503.7 492.4 500.7 491.7 498.5 491.8 C496.3 491.9 495.6 494.3 494.0 494.5 C492.4 494.7 491.5 497.7 489.2 493.1Z M562.5 238.8 C563.8 237.2 568.8 237.9 575.0 237.5 C581.2 237.1 591.9 236.4 600.0 236.5 C608.1 236.6 619.4 239.4 623.8 238.0 C628.1 236.6 624.3 230.4 626.0 228.0 C627.7 225.6 631.8 224.9 633.8 223.8 C635.7 222.6 634.8 220.6 637.5 221.0 C640.2 221.4 646.8 224.6 650.0 226.2 C653.2 227.9 652.9 229.0 656.8 230.9 C660.7 232.8 668.2 235.2 673.5 237.6 C678.8 240.0 686.5 242.4 688.6 245.1 C690.7 247.8 687.2 249.3 686.1 253.5 C685.0 257.7 683.4 264.7 681.9 270.3 C680.4 275.9 678.6 282.2 676.9 287.0 C675.2 291.8 673.3 295.7 671.8 298.8 C670.3 301.9 670.2 303.7 667.7 305.5 C665.2 307.3 661.4 308.6 656.8 309.7 C652.2 310.8 648.6 311.3 640.0 312.2 C631.4 313.1 612.9 317.0 605.0 315.0 C597.1 313.0 596.0 305.7 592.5 300.0 C589.0 294.3 587.1 286.9 584.2 280.6 C581.3 274.3 577.9 267.6 575.0 262.0 C572.1 256.4 569.1 250.9 567.0 247.0 C564.9 243.1 561.2 240.3 562.5 238.8Z" clip-rule="evenodd"/></clipPath></defs>
<path d="M424.0 563.8 C427.3 560.1 443.9 554.1 459.9 547.8 C475.9 541.5 500.5 532.2 519.8 525.9 C539.1 519.6 555.7 514.9 575.7 509.9 C595.7 504.9 622.3 500.2 639.6 495.9 C656.9 491.6 669.0 487.5 679.6 483.9 C690.2 480.2 693.5 477.0 703.5 474.0 C713.5 471.0 726.9 468.3 739.5 466.0 C752.1 463.7 766.1 460.7 779.4 460.0 C792.7 459.3 808.6 461.0 819.3 462.0 C829.9 463.0 837.3 464.3 843.3 466.0 C849.3 467.7 856.0 469.7 855.3 472.0 C854.6 474.3 848.6 477.4 839.3 480.0 C830.0 482.6 812.7 485.2 799.4 487.9 C786.1 490.5 770.0 492.9 759.4 495.9 C748.8 498.9 743.5 501.9 735.5 505.9 C727.5 509.9 720.8 514.9 711.5 519.9 C702.2 524.9 691.6 530.5 679.6 535.8 C667.6 541.1 652.9 546.8 639.6 551.8 C626.3 556.8 613.0 562.1 599.7 565.8 C586.4 569.5 573.0 571.8 559.7 573.8 C546.4 575.8 533.1 577.5 519.8 577.8 C506.5 578.1 493.2 577.1 479.9 575.8 C466.6 574.5 449.2 571.8 439.9 569.8 C430.6 567.8 420.7 567.5 424.0 563.8Z" fill="url(#shg)" filter="url(#sb)"/>
<path d="M489.2 493.1 C486.9 488.5 483.1 475.6 480.0 467.0 C476.9 458.4 473.1 445.9 470.6 441.2 C468.1 436.4 469.2 440.1 465.2 438.5 C461.2 436.9 451.7 435.7 446.6 431.9 C441.5 428.1 441.0 420.1 434.6 415.9 C428.2 411.7 413.1 409.1 408.0 406.6 C402.9 404.2 403.8 403.6 404.0 401.2 C404.2 398.8 407.5 395.4 409.3 391.9 C411.1 388.3 412.6 382.8 414.6 379.9 C416.6 377.0 419.5 375.9 421.3 374.6 C423.1 373.3 424.4 377.8 425.3 372.0 C426.2 366.2 425.9 348.7 426.5 340.0 C427.1 331.3 428.2 328.3 429.0 320.0 C429.8 311.7 430.4 298.8 431.0 290.0 C431.6 281.2 431.0 273.8 432.5 267.5 C434.0 261.2 436.7 258.8 440.0 252.5 C443.3 246.2 449.5 235.0 452.5 230.0 C455.5 225.0 457.5 224.4 458.0 222.5 C458.5 220.6 456.4 220.4 455.5 218.8 C454.6 217.1 450.5 216.8 452.5 212.5 C454.5 208.2 462.3 195.9 467.5 193.0 C472.7 190.1 478.3 195.0 483.8 195.0 C489.2 195.0 494.4 194.0 500.0 193.0 C505.6 192.0 511.7 190.8 517.5 188.8 C523.3 186.8 528.3 184.0 535.0 181.0 C541.7 178.0 550.8 173.5 557.5 171.0 C564.2 168.5 567.9 167.5 575.0 166.0 C582.1 164.5 590.8 162.9 600.0 162.0 C609.2 161.1 620.8 160.2 630.0 160.5 C639.2 160.8 646.7 162.2 655.0 163.8 C663.3 165.3 672.5 167.7 680.0 170.0 C687.5 172.3 694.2 174.4 700.0 177.5 C705.8 180.6 711.7 186.6 715.0 188.8 C718.3 190.9 717.5 190.8 720.0 190.5 C722.5 190.2 725.5 187.4 730.0 186.8 C734.5 186.2 741.4 185.8 747.0 186.8 C752.6 187.8 759.0 190.7 763.8 192.6 C768.6 194.5 772.8 196.8 775.6 198.5 C778.4 200.2 778.7 202.3 780.6 202.7 C782.5 203.1 783.9 200.9 787.3 201.0 C790.6 201.1 796.5 202.2 800.7 203.5 C804.9 204.8 809.0 206.3 812.4 208.6 C815.8 210.8 818.6 213.9 820.8 217.0 C823.0 220.1 824.7 223.1 825.8 227.0 C826.9 230.9 827.5 234.9 827.5 240.4 C827.5 245.9 826.8 252.6 826.0 260.0 C825.2 267.4 824.5 275.8 822.5 285.0 C820.5 294.2 816.8 306.6 814.0 315.0 C811.2 323.4 808.5 328.4 805.7 335.4 C802.9 342.4 799.4 352.4 797.4 357.2 C795.4 362.0 796.1 362.3 794.0 364.0 C791.9 365.7 790.7 365.5 785.0 367.5 C779.3 369.5 768.3 373.3 760.0 376.0 C751.7 378.7 741.2 381.8 735.0 383.8 C728.8 385.7 726.7 387.2 722.5 387.5 C718.3 387.8 714.2 384.7 710.0 385.5 C705.8 386.3 699.5 391.2 697.5 392.5 C695.5 393.8 701.1 389.9 698.2 393.2 C695.3 396.4 686.4 405.4 680.0 412.0 C673.6 418.6 666.7 425.9 660.0 433.0 C653.3 440.1 644.3 449.6 639.6 454.5 C634.9 459.4 636.0 459.8 631.6 462.5 C627.2 465.2 622.8 466.9 613.0 470.5 C603.2 474.1 588.8 478.7 573.0 483.8 C557.2 488.9 529.5 499.4 518.5 501.1 C507.5 502.8 510.3 495.6 507.0 494.0 C503.7 492.4 500.7 491.7 498.5 491.8 C496.3 491.9 495.6 494.3 494.0 494.5 C492.4 494.7 491.5 497.7 489.2 493.1Z M562.5 238.8 C563.8 237.2 568.8 237.9 575.0 237.5 C581.2 237.1 591.9 236.4 600.0 236.5 C608.1 236.6 619.4 239.4 623.8 238.0 C628.1 236.6 624.3 230.4 626.0 228.0 C627.7 225.6 631.8 224.9 633.8 223.8 C635.7 222.6 634.8 220.6 637.5 221.0 C640.2 221.4 646.8 224.6 650.0 226.2 C653.2 227.9 652.9 229.0 656.8 230.9 C660.7 232.8 668.2 235.2 673.5 237.6 C678.8 240.0 686.5 242.4 688.6 245.1 C690.7 247.8 687.2 249.3 686.1 253.5 C685.0 257.7 683.4 264.7 681.9 270.3 C680.4 275.9 678.6 282.2 676.9 287.0 C675.2 291.8 673.3 295.7 671.8 298.8 C670.3 301.9 670.2 303.7 667.7 305.5 C665.2 307.3 661.4 308.6 656.8 309.7 C652.2 310.8 648.6 311.3 640.0 312.2 C631.4 313.1 612.9 317.0 605.0 315.0 C597.1 313.0 596.0 305.7 592.5 300.0 C589.0 294.3 587.1 286.9 584.2 280.6 C581.3 274.3 577.9 267.6 575.0 262.0 C572.1 256.4 569.1 250.9 567.0 247.0 C564.9 243.1 561.2 240.3 562.5 238.8Z" fill="url(#bg1)" fill-rule="evenodd"/>
<g clip-path="url(#bodyclip)">
<path d="M404.0 401.2 C400.3 397.3 402.9 404.2 408.0 406.6 C413.1 409.1 422.0 413.2 434.6 415.9 C447.2 418.5 465.9 423.4 483.9 422.5 C501.9 421.6 522.7 416.1 542.4 410.6 C562.1 405.1 579.9 397.5 602.3 389.3 C624.7 381.1 657.3 368.0 676.9 361.3 C696.5 354.6 699.5 354.5 720.0 349.3 C740.5 344.1 780.0 324.9 800.0 330.0 C820.0 335.1 856.7 365.0 840.0 380.0 C823.3 395.0 736.7 400.0 700.0 420.0 C663.3 440.0 651.7 483.3 620.0 500.0 C588.3 516.7 535.0 525.0 510.0 520.0 C485.0 515.0 483.3 485.0 470.0 470.0 C456.7 455.0 441.0 441.5 430.0 430.0 C419.0 418.5 407.7 405.1 404.0 401.2Z" fill="#d9d9d9"/>
<path d="M408.0 406.6 C406.0 403.9 422.0 413.2 434.6 415.9 C447.2 418.5 465.9 423.4 483.9 422.5 C501.9 421.6 522.7 416.1 542.4 410.6 C562.1 405.1 583.5 396.1 602.3 389.3 C621.1 382.5 646.1 367.6 655.0 370.0 C663.9 372.4 665.3 395.4 655.6 403.9 C645.9 412.4 617.4 415.2 597.0 421.2 C576.6 427.2 549.1 436.0 533.1 439.8 C517.1 443.6 511.6 443.6 501.2 443.8 C490.8 444.0 479.7 443.2 470.6 441.2 C461.5 439.2 457.0 437.7 446.6 431.9 C436.2 426.1 410.0 409.3 408.0 406.6Z" fill="#cfcfcf" filter="url(#sb2)"/>
<path d="M409.3 391.9 C412.9 396.3 423.5 402.8 435.9 406.6 C448.3 410.4 466.1 415.2 483.9 414.5 C501.6 413.8 523.1 408.4 542.4 402.6 C561.7 396.8 592.8 385.4 599.7 379.9 C606.6 374.3 593.5 367.1 583.7 369.3 C573.9 371.5 557.5 386.8 541.1 393.2 C524.7 399.6 502.5 406.8 485.2 407.9 C467.9 409.0 449.1 404.6 437.3 399.9 C425.5 395.2 419.3 381.2 414.6 379.9 C409.9 378.6 405.8 387.4 409.3 391.9Z" fill="#f3f3f3"/>
<path d="M453.4 211.9 C456.5 211.6 467.1 213.7 475.2 215.7 C483.3 217.7 494.7 221.1 502.0 224.1 C509.3 227.1 514.0 230.6 518.8 233.7 C523.6 236.8 525.9 238.7 530.6 242.9 C535.4 247.1 542.8 254.3 547.3 258.8 C551.8 263.3 554.1 264.8 557.6 270.0 C561.1 275.2 565.6 284.7 568.5 290.0 C571.4 295.3 572.8 296.0 575.2 301.9 C577.6 307.8 581.3 318.0 582.8 325.3 C584.3 332.6 585.8 343.5 584.4 345.5 C583.0 347.5 576.3 342.7 574.4 337.1 C572.5 331.5 574.8 319.7 572.7 311.9 C570.6 304.1 565.6 297.1 561.8 290.1 C558.0 283.1 553.0 274.4 550.0 270.0 C547.0 265.6 547.5 267.9 544.0 263.9 C540.5 259.9 533.4 250.5 528.9 246.2 C524.4 241.9 521.7 240.7 517.1 237.9 C512.5 235.1 508.2 232.3 501.2 229.5 C494.2 226.7 482.6 223.1 475.2 221.1 C467.8 219.1 460.4 219.2 456.8 217.7 C453.2 216.2 450.3 212.2 453.4 211.9Z" fill="#d4d4d4"/>
<path d="M637.0 222.0 C637.0 220.5 648.2 220.8 655.5 222.0 C662.8 223.2 672.2 226.0 680.6 229.0 C689.0 232.0 698.9 235.8 705.8 240.0 C712.7 244.2 723.0 250.3 722.0 254.0 C721.0 257.7 705.5 263.2 700.0 262.0 C694.5 260.8 693.4 251.0 689.0 247.0 C684.6 243.0 679.5 240.7 673.9 238.0 C668.3 235.3 661.6 233.7 655.5 231.0 C649.4 228.3 637.0 223.5 637.0 222.0Z" fill="#bdbdbd" filter="url(#sb2)"/>
<path d="M432.0 270.0 C441.0 254.7 464.5 275.0 480.0 280.0 C495.5 285.0 511.7 295.7 525.0 300.0 C538.3 304.3 552.2 300.2 560.0 306.0 C567.8 311.8 572.0 325.7 572.0 335.0 C572.0 344.3 574.5 352.8 560.0 362.0 C545.5 371.2 505.0 385.7 485.0 390.0 C465.0 394.3 449.8 391.0 440.0 388.0 C430.2 385.0 427.3 391.7 426.0 372.0 C424.7 352.3 423.0 285.3 432.0 270.0Z" fill="#e3e3e3" filter="url(#sb2)"/>
<path d="M700.0 300.0 C716.7 285.0 773.3 281.7 790.0 290.0 C806.7 298.3 811.7 333.3 800.0 350.0 C788.3 366.7 738.3 385.0 720.0 390.0 C701.7 395.0 693.3 395.0 690.0 380.0 C686.7 365.0 683.3 315.0 700.0 300.0Z" fill="#dedede" filter="url(#sb2)"/>
</g>
<g fill="none" stroke="#0c0c0c" stroke-width="1.15" stroke-linejoin="round" stroke-linecap="round">
<path d="M489.2 493.1 C486.9 488.5 483.1 475.6 480.0 467.0 C476.9 458.4 473.1 445.9 470.6 441.2 C468.1 436.4 469.2 440.1 465.2 438.5 C461.2 436.9 451.7 435.7 446.6 431.9 C441.5 428.1 441.0 420.1 434.6 415.9 C428.2 411.7 413.1 409.1 408.0 406.6 C402.9 404.2 403.8 403.6 404.0 401.2 C404.2 398.8 407.5 395.4 409.3 391.9 C411.1 388.3 412.6 382.8 414.6 379.9 C416.6 377.0 419.5 375.9 421.3 374.6 C423.1 373.3 424.4 377.8 425.3 372.0 C426.2 366.2 425.9 348.7 426.5 340.0 C427.1 331.3 428.2 328.3 429.0 320.0 C429.8 311.7 430.4 298.8 431.0 290.0 C431.6 281.2 431.0 273.8 432.5 267.5 C434.0 261.2 436.7 258.8 440.0 252.5 C443.3 246.2 449.5 235.0 452.5 230.0 C455.5 225.0 457.5 224.4 458.0 222.5 C458.5 220.6 456.4 220.4 455.5 218.8 C454.6 217.1 450.5 216.8 452.5 212.5 C454.5 208.2 462.3 195.9 467.5 193.0 C472.7 190.1 478.3 195.0 483.8 195.0 C489.2 195.0 494.4 194.0 500.0 193.0 C505.6 192.0 511.7 190.8 517.5 188.8 C523.3 186.8 528.3 184.0 535.0 181.0 C541.7 178.0 550.8 173.5 557.5 171.0 C564.2 168.5 567.9 167.5 575.0 166.0 C582.1 164.5 590.8 162.9 600.0 162.0 C609.2 161.1 620.8 160.2 630.0 160.5 C639.2 160.8 646.7 162.2 655.0 163.8 C663.3 165.3 672.5 167.7 680.0 170.0 C687.5 172.3 694.2 174.4 700.0 177.5 C705.8 180.6 711.7 186.6 715.0 188.8 C718.3 190.9 717.5 190.8 720.0 190.5 C722.5 190.2 725.5 187.4 730.0 186.8 C734.5 186.2 741.4 185.8 747.0 186.8 C752.6 187.8 759.0 190.7 763.8 192.6 C768.6 194.5 772.8 196.8 775.6 198.5 C778.4 200.2 778.7 202.3 780.6 202.7 C782.5 203.1 783.9 200.9 787.3 201.0 C790.6 201.1 796.5 202.2 800.7 203.5 C804.9 204.8 809.0 206.3 812.4 208.6 C815.8 210.8 818.6 213.9 820.8 217.0 C823.0 220.1 824.7 223.1 825.8 227.0 C826.9 230.9 827.5 234.9 827.5 240.4 C827.5 245.9 826.8 252.6 826.0 260.0 C825.2 267.4 824.5 275.8 822.5 285.0 C820.5 294.2 816.8 306.6 814.0 315.0 C811.2 323.4 808.5 328.4 805.7 335.4 C802.9 342.4 799.4 352.4 797.4 357.2 C795.4 362.0 796.1 362.3 794.0 364.0 C791.9 365.7 790.7 365.5 785.0 367.5 C779.3 369.5 768.3 373.3 760.0 376.0 C751.7 378.7 741.2 381.8 735.0 383.8 C728.8 385.7 726.7 387.2 722.5 387.5 C718.3 387.8 714.2 384.7 710.0 385.5 C705.8 386.3 699.5 391.2 697.5 392.5 C695.5 393.8 701.1 389.9 698.2 393.2 C695.3 396.4 686.4 405.4 680.0 412.0 C673.6 418.6 666.7 425.9 660.0 433.0 C653.3 440.1 644.3 449.6 639.6 454.5 C634.9 459.4 636.0 459.8 631.6 462.5 C627.2 465.2 622.8 466.9 613.0 470.5 C603.2 474.1 588.8 478.7 573.0 483.8 C557.2 488.9 529.5 499.4 518.5 501.1 C507.5 502.8 510.3 495.6 507.0 494.0 C503.7 492.4 500.7 491.7 498.5 491.8 C496.3 491.9 495.6 494.3 494.0 494.5 C492.4 494.7 491.5 497.7 489.2 493.1Z"/><path d="M562.5 238.8 C563.8 237.2 568.8 237.9 575.0 237.5 C581.2 237.1 591.9 236.4 600.0 236.5 C608.1 236.6 619.4 239.4 623.8 238.0 C628.1 236.6 624.3 230.4 626.0 228.0 C627.7 225.6 631.8 224.9 633.8 223.8 C635.7 222.6 634.8 220.6 637.5 221.0 C640.2 221.4 646.8 224.6 650.0 226.2 C653.2 227.9 652.9 229.0 656.8 230.9 C660.7 232.8 668.2 235.2 673.5 237.6 C678.8 240.0 686.5 242.4 688.6 245.1 C690.7 247.8 687.2 249.3 686.1 253.5 C685.0 257.7 683.4 264.7 681.9 270.3 C680.4 275.9 678.6 282.2 676.9 287.0 C675.2 291.8 673.3 295.7 671.8 298.8 C670.3 301.9 670.2 303.7 667.7 305.5 C665.2 307.3 661.4 308.6 656.8 309.7 C652.2 310.8 648.6 311.3 640.0 312.2 C631.4 313.1 612.9 317.0 605.0 315.0 C597.1 313.0 596.0 305.7 592.5 300.0 C589.0 294.3 587.1 286.9 584.2 280.6 C581.3 274.3 577.9 267.6 575.0 262.0 C572.1 256.4 569.1 250.9 567.0 247.0 C564.9 243.1 561.2 240.3 562.5 238.8Z"/>
<path d="M453.4 211.9 C457.0 212.5 467.1 213.7 475.2 215.7 C483.3 217.7 494.7 221.1 502.0 224.1 C509.3 227.1 514.0 230.6 518.8 233.7 C523.6 236.8 525.9 238.7 530.6 242.9 C535.4 247.1 542.8 254.3 547.3 258.8 C551.8 263.3 554.1 264.8 557.6 270.0 C561.1 275.2 565.6 284.7 568.5 290.0 C571.4 295.3 572.8 296.0 575.2 301.9 C577.6 307.8 581.3 318.0 582.8 325.3 C584.3 332.6 584.4 339.9 584.4 345.5 C584.4 351.1 583.6 354.7 582.6 358.6 C581.6 362.5 580.7 365.8 578.6 369.0 C576.5 372.2 576.6 375.2 570.2 378.0 C563.8 380.8 554.4 381.6 540.0 385.5 C525.6 389.4 500.8 398.8 483.8 401.2 C466.7 403.7 449.8 401.9 437.5 400.0 C425.2 398.1 414.6 391.7 410.0 390.0"/>
<path d="M456.8 217.7 C459.9 218.3 467.8 219.1 475.2 221.1 C482.6 223.1 494.2 226.7 501.2 229.5 C508.2 232.3 512.5 235.1 517.1 237.9 C521.7 240.7 524.4 241.9 528.9 246.2 C533.4 250.5 540.5 259.9 544.0 263.9 C547.5 267.9 547.0 265.6 550.0 270.0 C553.0 274.4 558.0 283.1 561.8 290.1 C565.6 297.1 570.6 304.1 572.7 311.9 C574.8 319.7 574.7 330.4 574.4 337.1 C574.1 343.8 573.9 347.2 571.0 352.2 C568.1 357.2 562.0 363.2 556.8 367.3 C551.6 371.4 551.9 372.8 540.0 377.0 C528.1 381.2 501.9 390.1 485.2 392.8 C468.5 395.6 450.6 396.5 440.0 393.5 C429.4 390.5 424.4 377.8 421.3 374.6"/>
<path d="M455.1 221.9 C458.6 223.0 468.3 226.4 476.0 228.6 C483.7 230.8 494.6 232.9 501.2 235.3 C507.8 237.7 511.3 240.7 515.5 242.9 C519.7 245.2 522.5 245.3 526.4 248.8 C530.3 252.3 536.2 260.4 539.0 263.9 C541.8 267.4 540.4 265.6 543.4 270.0 C546.4 274.4 552.9 283.7 556.8 290.1 C560.7 296.5 564.4 302.2 566.8 308.6 C569.2 315.0 570.1 323.1 571.0 328.7 C571.9 334.3 572.4 338.2 571.9 342.1 C571.4 346.0 570.8 348.6 567.7 352.2 C564.6 355.8 558.0 360.8 553.4 363.9 C548.8 367.0 551.4 367.0 540.0 370.6 C528.6 374.2 501.0 382.7 485.0 385.5 C469.0 388.3 453.3 389.0 443.8 387.5 C434.2 386.0 430.6 378.8 427.5 376.2 C424.4 373.7 425.7 372.7 425.3 372.0"/>
<path d="M485.3 195.9 C483.6 199.1 476.8 210.4 475.2 215.2 C473.6 219.9 476.1 221.9 476.0 224.4 C475.9 226.9 476.2 226.5 474.4 230.3 C472.6 234.1 468.5 241.4 465.2 247.0 C461.9 252.6 456.7 259.7 454.3 263.9 C451.9 268.1 451.8 267.8 450.9 272.2 C450.0 276.6 449.8 279.7 449.2 290.0 C448.6 300.3 447.9 325.7 447.5 334.0 C447.1 342.3 447.9 333.2 446.6 340.0 C445.4 346.8 441.6 367.0 440.0 375.0 C438.4 383.0 437.8 385.8 437.3 387.9"/>
<path d="M512.1 204.8 C510.4 208.1 503.8 219.6 502.0 224.4 C500.2 229.2 502.3 229.9 501.2 233.7 C500.1 237.5 497.9 242.0 495.3 247.0 C492.7 252.0 487.8 258.8 485.3 263.9 C482.8 268.9 481.1 272.9 480.3 277.3 C479.5 281.7 480.2 280.6 480.3 290.0 C480.4 299.4 480.6 325.7 481.0 334.0 C481.4 342.3 481.8 330.1 482.5 340.0 C483.2 349.9 484.8 384.3 485.2 393.2"/>
<path d="M528.9 246.2 C528.2 250.2 525.5 261.9 525.0 270.0 C524.5 278.1 525.2 285.0 526.0 295.0 C526.8 305.0 529.2 322.5 530.0 330.0 C530.8 337.5 529.1 332.6 530.5 340.0 C531.9 347.4 537.1 368.8 538.4 374.6"/>
<path d="M432.5 267.5 C433.8 267.7 436.9 268.1 440.0 268.9 C443.1 269.7 444.2 270.5 450.9 272.2 C457.6 273.9 471.7 276.4 480.3 279.0 C488.9 281.6 495.1 284.2 502.5 287.5 C509.9 290.8 517.9 296.2 525.0 298.8 C532.1 301.2 539.2 301.5 545.0 302.5 C550.8 303.5 557.5 304.6 560.0 305.0"/>
<path d="M485.3 196.0 C489.8 197.5 504.7 202.1 512.1 204.8 C519.6 207.5 525.0 209.6 530.0 212.0 C535.0 214.4 538.6 216.9 542.3 219.4 C546.0 221.9 549.5 224.7 552.0 227.0 C554.5 229.3 555.8 231.0 557.5 233.0 C559.2 235.0 561.7 237.8 562.5 238.8"/>
<path d="M521.3 189.2 C523.4 190.5 529.6 193.4 533.9 196.8 C538.2 200.2 543.7 205.2 547.3 209.9 C550.9 214.7 553.9 221.6 555.7 225.3 C557.5 229.0 557.6 230.9 558.0 232.0"/>
<path d="M542.3 219.4 L528.9 244.6"/>
<path d="M565.0 245.4 C564.0 248.9 562.0 261.6 559.0 266.4 C556.0 271.1 549.2 272.6 547.3 273.9"/>
<path d="M512.1 204.8 C515.7 203.5 526.4 199.5 533.9 196.8 C541.4 194.1 549.7 191.0 557.4 188.4 C565.1 185.8 572.0 183.2 580.0 181.0 C588.0 178.8 595.4 176.6 605.2 175.2 C615.0 173.8 627.5 172.3 638.7 172.6 C649.9 172.9 661.9 174.8 672.2 176.8 C682.6 178.8 692.4 181.3 700.8 184.4 C709.2 187.5 716.7 192.1 722.6 195.3 C728.5 198.5 733.8 202.3 736.0 203.7"/>
<path d="M547.3 209.9 C550.7 208.6 562.0 203.4 567.5 201.8 C573.0 200.2 573.7 201.4 580.0 200.3 C586.3 199.2 595.1 196.5 605.2 195.3 C615.3 194.1 629.2 192.9 640.4 193.3 C651.6 193.7 662.1 195.7 672.2 197.8 C682.3 200.0 692.4 203.1 700.8 206.2 C709.2 209.3 716.5 213.3 722.6 216.2 C728.8 219.1 735.2 222.5 737.7 223.8"/>
<path d="M557.4 225.3 C560.2 224.3 570.4 220.6 574.2 219.4 C578.0 218.2 574.8 218.5 580.0 217.9 C585.2 217.3 596.2 215.9 605.2 215.9 C614.2 215.9 625.3 217.2 633.7 217.9 C642.1 218.7 647.7 218.9 655.5 220.4 C663.3 221.9 672.2 224.0 680.6 227.1 C689.0 230.2 698.2 234.3 705.8 238.9 C713.3 243.5 722.5 252.2 725.9 254.8"/>
<path d="M565.0 170.0 C566.8 171.7 573.0 176.7 575.9 180.0 C578.8 183.3 580.6 185.5 582.6 190.0 C584.6 194.5 586.5 201.2 587.6 206.8 C588.7 212.4 588.9 218.6 589.3 223.6 C589.7 228.6 589.9 234.8 590.0 237.0"/>
<path d="M629.5 160.9 C630.9 162.4 635.9 166.3 637.9 170.1 C639.9 173.9 640.7 178.5 641.2 183.5 C641.8 188.5 641.8 194.7 641.2 200.3 C640.7 205.9 638.5 214.3 637.9 217.1"/>
<path d="M697.4 177.7 C698.2 179.5 701.8 184.0 702.4 188.6 C703.0 193.2 702.2 199.7 700.8 205.3 C699.4 210.9 696.8 217.5 694.0 222.1 C691.2 226.7 687.4 230.6 684.0 233.0 C680.6 235.4 675.6 235.8 673.9 236.4"/>
<path d="M720.2 190.1 C721.9 191.5 727.5 196.0 730.3 198.5 C733.1 201.0 735.6 201.6 737.0 205.2 C738.4 208.8 739.0 215.0 738.7 220.3 C738.4 225.6 737.2 231.1 735.3 237.0 C733.3 242.9 728.7 251.6 727.0 255.5 C725.3 259.4 725.6 259.7 725.3 260.5"/>
<path d="M732.0 197.7 C733.0 196.8 735.5 193.8 738.0 192.0 C740.5 190.2 745.5 187.7 747.0 186.8"/>
<path d="M738.7 206.0 C740.7 205.6 746.8 204.5 750.4 203.5 C754.0 202.5 757.7 200.4 760.5 199.8 C763.3 199.2 764.1 199.8 767.2 200.2 C770.3 200.5 777.0 201.6 779.0 201.9"/>
<path d="M760.5 199.8 C760.8 203.2 762.1 214.1 762.1 220.3 C762.1 226.5 761.6 230.6 760.5 237.0 C759.4 243.4 757.1 251.7 755.4 258.9 C753.7 266.1 751.2 276.5 750.4 280.0"/>
<path d="M770.5 201.0 C771.2 204.2 774.1 214.3 774.7 220.3 C775.3 226.3 774.6 230.8 773.9 237.0 C773.2 243.2 771.9 250.0 770.5 257.2 C769.1 264.4 766.3 276.2 765.5 280.0"/>
<path d="M780.6 202.7 C781.4 204.5 784.4 209.3 785.6 213.6 C786.9 217.9 787.5 223.4 788.1 228.7 C788.7 234.0 789.1 239.5 789.0 245.4 C788.9 251.3 788.1 258.1 787.3 263.9 C786.5 269.7 784.5 277.3 784.0 280.0"/>
<path d="M782.3 206.0 C783.1 208.4 786.0 215.1 787.3 220.3 C788.5 225.5 789.4 231.4 789.8 237.0 C790.2 242.6 790.2 247.6 789.8 253.8 C789.4 260.0 787.7 270.6 787.3 274.0"/>
<path d="M738.7 220.3 C740.7 221.4 746.5 225.3 750.4 227.0 C754.3 228.7 758.2 229.6 762.1 230.4 C766.0 231.2 769.7 231.2 773.9 232.0 C778.1 232.8 785.1 234.8 787.3 235.4"/>
<path d="M727.0 255.5 C728.7 256.5 732.3 259.4 737.0 261.4 C741.7 263.3 749.8 265.7 755.4 267.2 C761.0 268.7 765.7 270.3 770.5 270.6 C775.3 270.9 781.8 269.2 784.0 268.9"/>
<path d="M795.7 206.0 C797.1 207.6 802.3 211.5 804.0 215.3 C805.7 219.1 805.6 223.9 805.7 228.7 C805.9 233.4 805.7 237.9 804.9 243.8 C804.1 249.7 802.0 257.9 800.7 263.9 C799.5 269.9 798.0 277.3 797.4 280.0"/>
<path d="M812.4 208.6 C813.5 210.6 817.9 215.6 819.2 220.3 C820.5 225.0 820.0 233.1 820.0 237.0 C820.0 240.9 820.2 239.3 819.2 243.8 C818.2 248.3 815.5 257.9 814.1 263.9 C812.7 269.9 811.3 277.3 810.8 280.0"/>
<path d="M789.0 206.0 C790.4 206.7 795.2 208.4 797.4 210.2 C799.6 212.0 801.6 215.9 802.4 217.0"/>
<path d="M789.0 237.0 C791.5 238.1 799.0 242.8 804.0 243.8 C809.0 244.8 815.4 242.6 819.2 242.9 C823.0 243.2 825.5 245.0 826.7 245.4"/>
<path d="M797.4 205.2 C799.1 206.9 804.6 213.6 807.4 215.3 C810.2 217.0 811.9 215.0 814.1 215.3 C816.3 215.6 819.7 216.7 820.8 217.0"/>
<path d="M602.0 313.9 C603.4 315.5 607.6 320.8 610.3 323.4 C612.9 325.9 615.1 327.5 617.9 329.2 C620.7 330.9 622.2 332.0 627.1 333.4 C632.0 334.8 638.8 336.9 647.2 337.6 C655.6 338.3 668.2 338.6 677.4 337.6 C686.6 336.6 695.5 334.1 702.6 331.7 C709.7 329.3 717.1 324.8 720.0 323.4"/>
<path d="M606.0 319.5 C609.2 319.6 619.3 319.9 625.0 319.8 C630.7 319.7 637.5 319.0 640.0 318.9"/>
<path d="M640.0 316.4 C644.2 317.1 659.2 318.3 665.1 320.6 C671.0 322.9 673.5 328.4 675.2 330.0"/>
<path d="M634.0 312.8 C639.0 314.3 658.6 320.2 664.1 322.0 C669.6 323.8 665.1 320.8 667.3 323.4 C669.5 326.0 675.7 335.2 677.4 337.6"/>
<path d="M582.6 358.6 C582.8 360.4 590.6 363.5 583.7 369.3 C576.8 375.1 557.5 386.8 541.1 393.2 C524.7 399.6 502.5 406.8 485.2 407.9 C467.9 409.0 449.1 404.6 437.3 399.9 C425.5 395.2 418.4 383.2 414.6 379.9"/>
<path d="M575.2 301.9 L583.6 280.0"/>
<path d="M409.3 391.9 C413.7 394.3 423.5 402.8 435.9 406.6 C448.3 410.4 466.1 415.2 483.9 414.5 C501.6 413.8 523.1 408.4 542.4 402.6 C561.7 396.8 583.4 387.3 599.7 379.9 C616.0 372.5 627.0 365.1 640.0 358.0 C653.0 350.9 671.2 341.0 677.4 337.6"/>
<path d="M404.0 401.2 C404.7 402.1 402.9 404.2 408.0 406.6 C413.1 409.1 422.0 413.2 434.6 415.9 C447.2 418.5 465.9 423.4 483.9 422.5 C501.9 421.6 522.7 416.1 542.4 410.6 C562.1 405.1 579.9 397.5 602.3 389.3 C624.7 381.1 657.3 368.0 676.9 361.3 C696.5 354.6 712.8 351.3 720.0 349.3"/>
<path d="M434.6 415.9 C436.6 418.6 441.5 428.1 446.6 431.9 C451.7 435.7 461.2 436.9 465.2 438.5 C469.2 440.1 464.6 440.3 470.6 441.2 C476.6 442.1 490.8 444.0 501.2 443.8 C511.6 443.6 517.1 443.6 533.1 439.8 C549.1 436.0 576.6 427.2 597.0 421.2 C617.4 415.2 638.7 408.6 655.6 403.9 C672.5 399.2 691.1 395.0 698.2 393.2"/>
<path d="M437.3 387.9 L434.6 415.9"/>
<path d="M485.2 393.2 C485.0 398.1 481.2 414.1 483.9 422.5 C486.6 430.9 498.1 432.7 501.2 443.8 C504.3 454.9 502.3 481.6 502.5 489.1"/>
<path d="M538.4 374.6 C539.1 380.6 542.4 401.3 542.4 410.6 C542.4 419.9 539.9 425.6 538.4 430.5 C536.9 435.4 536.4 428.0 533.1 439.8 C529.8 451.6 520.9 490.9 518.5 501.1"/>
<path d="M582.6 358.6 C585.7 361.7 597.5 371.7 601.1 377.0 C604.7 382.3 604.8 384.8 604.4 390.4 C604.0 396.0 600.7 404.0 598.6 410.6 C596.5 417.2 596.2 417.8 591.9 430.0 C587.6 442.2 576.1 474.8 573.0 483.8"/>
<path d="M677.4 337.6 C677.5 339.7 677.8 345.8 677.8 350.0 C677.8 354.2 678.0 358.6 677.4 362.8 C676.8 367.0 675.7 370.7 674.0 375.3 C672.3 379.9 669.8 385.8 667.3 390.4 C664.8 395.0 662.4 398.0 659.0 403.0 C655.6 408.0 654.9 409.4 647.2 420.6 C639.5 431.9 618.7 462.2 613.0 470.5"/>
<path d="M582.6 358.6 C585.5 356.2 594.1 348.9 600.0 344.0 C605.9 339.1 614.9 331.7 617.9 329.2"/>
<path d="M567.7 352.2 L582.6 358.6"/>
<path d="M784.0 280.0 C783.1 283.1 780.6 293.3 778.9 298.6 C777.2 303.9 775.3 307.8 773.9 312.0 C772.5 316.2 771.6 320.3 770.5 323.7 C769.4 327.1 768.0 329.6 767.2 332.1 C766.4 334.6 765.6 336.6 765.5 338.8 C765.4 341.0 764.9 344.9 766.3 345.5 C767.7 346.1 771.0 343.8 773.9 342.1 C776.8 340.4 781.1 337.9 783.9 335.4 C786.7 332.9 789.5 328.5 790.6 327.1"/>
<path d="M787.3 274.0 C787.3 275.0 788.1 276.0 787.3 280.1 C786.5 284.2 784.0 293.0 782.3 298.6 C780.6 304.2 778.9 308.9 777.2 313.6 C775.5 318.4 773.6 323.7 772.2 327.1 C770.8 330.5 769.5 332.7 768.9 333.8"/>
<path d="M797.4 280.0 C797.4 282.2 798.5 288.4 797.4 293.5 C796.3 298.6 793.4 306.2 790.6 310.3 C787.8 314.4 783.4 314.7 780.6 318.0 C777.8 321.3 775.8 326.7 774.0 330.0 C772.2 333.3 770.7 336.7 770.0 338.0"/>
<path d="M800.7 263.9 C801.2 266.3 804.0 272.9 804.0 278.4 C804.0 283.9 802.4 291.0 800.7 296.9 C799.0 302.8 795.8 308.6 794.0 313.6 C792.2 318.6 791.5 321.5 789.8 327.1 C788.1 332.7 785.7 340.8 783.9 347.2 C782.1 353.6 779.7 362.5 778.9 365.6"/>
<path d="M810.8 280.0 C810.3 284.2 808.6 296.9 808.0 305.0 C807.4 313.1 808.7 321.2 807.4 328.7 C806.1 336.2 801.7 345.2 800.0 350.0 C798.3 354.8 797.8 356.0 797.4 357.2"/>
<path d="M680.0 300.2 C682.8 301.1 691.8 303.6 696.8 305.3 C701.8 307.0 705.7 307.5 710.2 310.3 C714.7 313.1 718.9 319.6 723.6 322.0 C728.4 324.4 733.4 323.8 738.7 324.5 C744.0 325.2 751.5 323.8 755.4 326.2 C759.3 328.6 760.3 335.6 762.1 338.8 C763.9 342.0 765.6 344.4 766.3 345.5"/>
<path d="M680.0 358.9 C682.8 358.2 690.6 355.9 696.8 354.7 C702.9 353.4 711.3 350.7 716.9 351.4 C722.5 352.1 726.1 356.4 730.3 358.9 C734.5 361.4 737.0 365.4 742.0 366.5 C747.0 367.6 754.1 366.6 760.5 365.6 C766.9 364.6 774.7 361.7 780.6 360.6 C786.5 359.5 793.2 359.2 795.7 358.9"/>
<path d="M773.9 273.4 C775.6 274.0 779.4 276.0 783.9 276.8 C788.4 277.6 795.7 278.0 800.7 278.4 C805.7 278.8 810.5 278.9 814.1 279.3 C817.7 279.7 821.1 280.7 822.5 281.0"/>
<path d="M789.8 327.1 L807.4 328.7"/>
<path d="M697.0 250.2 C696.7 252.1 696.4 257.1 695.3 261.9 C694.2 266.6 692.2 273.4 690.3 278.7 C688.3 284.0 686.4 289.8 683.6 293.7 C680.8 297.6 676.1 300.1 673.5 302.1 C670.9 304.1 668.7 304.9 667.7 305.5"/>
<path d="M688.6 245.1 C690.3 246.2 695.6 249.0 698.7 251.8 C701.8 254.6 705.5 258.0 707.0 261.9 C708.5 265.8 708.4 270.6 707.9 275.3 C707.4 280.1 705.8 286.2 703.7 290.4 C701.6 294.6 698.9 297.9 695.3 300.4 C691.7 302.9 688.3 303.7 681.9 305.5 C675.5 307.3 663.8 310.1 656.8 311.3 C649.8 312.6 642.8 312.7 640.0 313.0"/>
<path d="M698.7 251.8 C700.1 253.2 703.6 258.9 707.0 260.2 C710.4 261.5 715.4 260.4 718.8 259.4 C722.2 258.4 725.8 255.2 727.2 254.4"/>
<path d="M688.6 250.2 L697.0 250.2"/>
<path d="M750.4 280.0 C748.7 282.8 744.6 290.2 740.4 296.9 C736.2 303.6 728.7 313.7 725.3 320.4 C721.9 327.1 721.6 331.9 720.2 337.1 C718.8 342.3 719.3 348.8 716.9 351.4 C714.5 354.0 708.3 349.5 705.9 352.7 C703.5 355.9 703.4 364.3 702.6 370.3 C701.8 376.3 701.2 385.7 700.9 388.8"/>
<path d="M765.5 280.0 C765.2 283.6 765.5 294.2 763.8 301.9 C762.1 309.6 757.9 318.6 755.4 326.2 C752.9 333.8 750.9 340.5 748.7 347.2 C746.5 353.9 743.1 363.3 742.0 366.5"/>
<path d="M766.3 345.5 C765.3 348.9 761.8 361.2 760.5 365.6 C759.2 370.0 759.1 370.9 758.8 372.0"/>
<path d="M727.2 254.4 C726.9 257.1 726.4 264.9 725.5 270.3 C724.6 275.7 723.5 281.4 722.1 287.0 C720.7 292.6 719.1 299.9 717.1 303.8 C715.1 307.7 713.8 308.3 710.4 310.5 C707.0 312.7 703.1 315.4 697.0 317.2 C690.9 319.0 683.0 321.1 673.5 321.4 C664.0 321.7 645.6 319.3 640.0 318.9"/>
<path d="M710.4 310.5 C712.6 312.3 719.9 318.1 723.8 321.4 C727.7 324.6 732.2 328.6 733.9 330.0"/>
</g>
<g stroke="#74828e" stroke-width="1.2" fill="#5a6a77">
<path d="M771 95 L683 462"/>
<path d="M395 427.5 L555 378"/>
<path d="M509.5 392 L522 558"/>
<path d="M561 384 L573.75 542"/>
<circle cx="771" cy="95" r="1.7" stroke="none"/>
<circle cx="683" cy="462" r="1.7" stroke="none"/>
<circle cx="741.25" cy="221.25" r="1.7" stroke="none"/>
<circle cx="731.25" cy="261.25" r="1.7" stroke="none"/>
<circle cx="395" cy="427.5" r="1.7" stroke="none"/>
<circle cx="490" cy="398" r="1.7" stroke="none"/>
<circle cx="555" cy="378" r="1.7" stroke="none"/>
<circle cx="561.25" cy="375.5" r="1.7" stroke="none"/>
<circle cx="555" cy="386" r="1.7" stroke="none"/>
<circle cx="562" cy="383.75" r="1.7" stroke="none"/>
<circle cx="509.5" cy="392" r="1.7" stroke="none"/>
<circle cx="522" cy="558" r="1.7" stroke="none"/>
<circle cx="573.75" cy="542" r="1.7" stroke="none"/>
</g></svg><!--/VIEW-->
<!--MISC--><svg class="abs" style="left:194.3px;top:576.3px" width="12" height="12" viewBox="0 0 12 12"><path d="M1.2 3.2 L3.2 1 H9.8 Q11 1 11 2.2 V8.6 L9 11 H2.4 Q1.2 11 1.2 9.8Z" fill="#fdfdfd" stroke="#2b3035" stroke-width="1" stroke-linejoin="round"/><path d="M2.8 4.2 L6 2.6 L9.6 4 L6.4 5.6Z" fill="#7cc0e8"/><path d="M2.8 4.2 L6.4 5.6 V9.8 L2.8 8.2Z" fill="#2d7fb0"/><path d="M6.4 5.6 L9.6 4 V8 L6.4 9.8Z" fill="#1f6a9a"/><path d="M2.8 4.2 L6.4 5.6 L9.6 4 M6.4 5.6 V9.8" fill="none" stroke="#d6ecf8" stroke-width=".5"/></svg>
<div class="abs bc" style="left:211.5px;top:574.8px;font-size:7.6px;line-height:14px;color:#2f8bd0;white-space:nowrap">Jigsaw Top Level Assembly_complete</div>
<div class="abs" style="left:344.4px;top:574.8px;font-size:7.6px;line-height:14px;color:#6a6d70">\</div>
<svg class="abs" style="left:351.5px;top:576.3px" width="12" height="12" viewBox="0 0 12 12"><path d="M1.2 3.2 L3.2 1 H9.8 Q11 1 11 2.2 V8.6 L9 11 H2.4 Q1.2 11 1.2 9.8Z" fill="#fdfdfd" stroke="#2b3035" stroke-width="1" stroke-linejoin="round"/><path d="M2.8 4.2 L6 2.6 L9.6 4 L6.4 5.6Z" fill="#7cc0e8"/><path d="M2.8 4.2 L6.4 5.6 V9.8 L2.8 8.2Z" fill="#2d7fb0"/><path d="M6.4 5.6 L9.6 4 V8 L6.4 9.8Z" fill="#1f6a9a"/><path d="M2.8 4.2 L6.4 5.6 L9.6 4 M6.4 5.6 V9.8" fill="none" stroke="#d6ecf8" stroke-width=".5"/></svg>
<div class="abs bc" style="left:369.3px;top:574.2px;font-size:7.6px;line-height:14px;color:#26709f;white-space:nowrap;text-decoration:underline;letter-spacing:-.03px">Jigsaw Shape (Jigsaw Shape.1)</div>
<svg class="abs" style="left:484.5px;top:575px" width="20" height="22" viewBox="0 0 20 22"><path d="M2 6.4 L6.4 3 H10.8 L11.6 9.4 L15.6 10.6 L16.6 15.6 L9 20.2 L2.6 16.6Z" fill="#f6f6f6" stroke="#2b3035" stroke-width="1.1" stroke-linejoin="round"/><path d="M2.6 16.4 L2.4 7 L7.4 9 L7.8 13.4 L11.6 15.4 L11.8 18.2 L9 20Z" fill="#dcdcdc"/><path d="M2.4 7 L7.4 9 L7.8 13.4 L11.8 15.4 M7.4 9 L11.4 9.2 M11.8 15.4 L16.4 13" fill="none" stroke="#7d8286" stroke-width=".7"/><path d="M1.2 2 H8 V9 H1.2Z" fill="#2d7fb0" stroke="#1d5a80" stroke-width=".5"/><path d="M2.6 7.6 L6.4 3.8 M3.8 3.6 H6.6 V6.4" fill="none" stroke="#e6f3fa" stroke-width="1.1"/><path d="M10.4 15 L15.4 10 L18.4 13 L13.4 18 L9.6 19Z" fill="#2d7fb0" stroke="#1d2a33" stroke-width=".9" stroke-linejoin="round"/><path d="M10.4 15 L13.4 18" stroke="#1d2a33" stroke-width=".7"/></svg>
<svg class="abs" style="left:511px;top:581px" width="14" height="14" viewBox="0 0 14 14"><path d="M2 4 L5 2.4 L7 3.4 L9 2.4 L12 4 V7 L12 10 L9 11.6 L7 10.6 L5 11.6 L2 10Z" fill="#e4e6e7" stroke="#8d9195" stroke-width=".7" stroke-dasharray="1.2 .8"/><path d="M5 4.6 L8 3.6 L10 5 V9 L7.4 11 L5 9.4Z" fill="#2d7fb0" stroke="#1d5a80" stroke-width=".5"/><path d="M5 6.6 L7.4 7.6 L10 6.4 M7.4 5 V11" fill="none" stroke="#bfe0f2" stroke-width=".6"/></svg>
<svg class="abs" style="left:531.4px;top:586px" width="4" height="4" viewBox="0 0 4 4"><path d="M2 .6 L3.6 3.2 H.4Z" fill="#222"/></svg>
<div class="abs" style="left:1057px;top:122.5px;width:29px;height:22px;background:#f5f5f5;border-radius:2px"></div>
<svg class="abs" style="left:1066.5px;top:128.5px" width="10" height="12" viewBox="0 0 10 12"><path d="M7 1.6 L2.6 6 L7 10.4" fill="none" stroke="#3d4043" stroke-width="1.3"/></svg>
<svg class="abs" style="left:1095px;top:90px" width="100" height="90" viewBox="1095 90 100 90">
<g fill="none" stroke="#d2d2d2" stroke-width=".8"><path d="M1110.5 122 L1143 111.5 L1172.5 119 L1176 160 L1142 172 L1114 162.5Z"/><path d="M1110.5 122 L1146.5 129.5 L1172.5 119 M1146.5 129.5 L1142 172"/><path d="M1143 111.5 L1143.6 152 L1114 162.5 M1143.6 152 L1176 160" stroke="#e2e2e2"/></g>
<path d="M1143.8 112 L1144.8 131" stroke="#5fb0dc" stroke-width="1.6"/>
<path d="M1145.5 122.5 L1157.5 125.5 L1157 146 L1144.5 141Z" fill="#d9cfd1" stroke="#c4babc" stroke-width=".5"/>
<path d="M1129 145 L1144.5 140.5 L1157 145.5 L1141 150.5Z" fill="#e2d8da" stroke="#c4babc" stroke-width=".5"/>
<path d="M1129 145 L1141 150.5 L1141 152.6 L1129 147Z M1141 150.5 L1157 145.5 V147.4 L1141 152.6Z" fill="#cfc5c7"/>
<g fill="#4a6a7c"><path d="M1129.4 147 L1131.6 148 L1132.6 163.4 L1130.4 162.6Z"/><path d="M1141.4 152.6 L1143.8 152 L1145 167 L1142.6 167.4Z"/><path d="M1155 148 L1157 147.4 L1158.4 161.6 L1156.4 162Z"/><path d="M1143.4 147 L1145 147 L1146 158 L1144.4 158Z" opacity=".7"/>
<path d="M1128.6 135.4 L1143.6 132 L1144.2 134 L1129.6 138Z"/><path d="M1143 138.2 L1160.4 134.6 L1160.8 136.8 L1144 140.6Z"/></g>
<path d="M1140 158.4 L1110.5 165.6" stroke="#f07860" stroke-width="1.3"/><path d="M1110.5 165.6 L1118 162.6 L1118.6 165Z" fill="#e04848"/>
<path d="M1150 157 L1176 161.5" stroke="#7ab860" stroke-width="1.3"/><path d="M1177 161.8 L1170 159.2 L1169.6 161.8Z" fill="#5ea044"/>
<g font-family="Liberation Sans,sans-serif" font-weight="700" font-size="14px" text-anchor="middle"><text x="1143.4" y="106.6" fill="#3a9ad4">Z</text><text x="1107" y="169.8" fill="#e0445a">X</text><text x="1181.4" y="166.4" fill="#69ae46">Y</text></g>
</svg>
<div class="abs" style="left:1126.5px;top:192.5px;width:45.5px;height:15px;background:#f4f4f4;border:1px solid #c9c9c9;border-radius:2.5px"></div>
<div class="abs" style="left:1131px;top:193px;font-size:7.6px;line-height:14px;color:#55585a">mm</div>
<svg class="abs" style="left:1161px;top:197.5px" width="8" height="6" viewBox="0 0 8 6"><path d="M.8 .8 H7.2 L4 4.8Z" fill="#222"/></svg>
<div class="abs" style="left:1162.6px;top:511.2px;width:27.4px;height:27.4px;border-radius:14px;background:#fff;border:1px solid #dedede;box-shadow:0 0 5px rgba(0,0,0,.13)"></div>
<svg class="abs" style="left:1165px;top:516px" width="22" height="16" viewBox="0 0 22 16"><path d="M2.4 12.4 C2 6 5.6 3.2 9.4 3.2 C13.6 3.2 15.8 6.4 16.8 9.6 L17.6 12Z" fill="#ececec" stroke="#2a2c2e" stroke-width="1"/><path d="M1.6 12.4 L6 13.6 L20.4 12" fill="none" stroke="#2a2c2e" stroke-width="1.1" stroke-linecap="round"/><path d="M5.6 7.8 H6.6 M7.8 7.8 H8.8 M10 7.8 H11" stroke="#8a8c8e" stroke-width="1.1"/></svg><!--/MISC-->
<!--TOOLBAR--><div class="abs" style="left:398.5px;top:605.5px;width:419px;height:14px;background:#d3d7d8;border:1px solid #c9cdcf;border-bottom:none;border-radius:2px 2px 0 0"></div>
<div class="abs tbt" style="left:398.5px;top:605.5px;width:42.0px;height:14.5px;background:#f3f3f3;border-right:1px solid #c3c7c9;line-height:14.5px;text-align:center;font-size:7.5px;color:#3d3d3d;white-space:nowrap">Standard</div>
<div class="abs tbt" style="left:440.5px;top:605.5px;width:35.10000000000002px;height:14.5px;border-right:1px solid #c3c7c9;line-height:14.5px;text-align:center;font-size:7.5px;color:#3d3d3d;white-space:nowrap">Sketch</div>
<div class="abs tbt" style="left:475.6px;top:605.5px;width:40.39999999999998px;height:14.5px;border-right:1px solid #c3c7c9;line-height:14.5px;text-align:center;font-size:7.5px;color:#3d3d3d;white-space:nowrap">Features</div>
<div class="abs tbt" style="left:516px;top:605.5px;width:41.5px;height:14.5px;border-right:1px solid #c3c7c9;line-height:14.5px;text-align:center;font-size:7.5px;color:#3d3d3d;white-space:nowrap">Surfaces</div>
<div class="abs tbt" style="left:557.5px;top:605.5px;width:43.10000000000002px;height:14.5px;border-right:1px solid #c3c7c9;line-height:14.5px;text-align:center;font-size:7.5px;color:#3d3d3d;white-space:nowrap">Assembly</div>
<div class="abs tbt" style="left:600.6px;top:605.5px;width:68.39999999999998px;height:14.5px;border-right:1px solid #c3c7c9;line-height:14.5px;text-align:center;font-size:7.5px;color:#3d3d3d;white-space:nowrap">Design Guidance</div>
<div class="abs tbt" style="left:669px;top:605.5px;width:29px;height:14.5px;border-right:1px solid #c3c7c9;line-height:14.5px;text-align:center;font-size:7.5px;color:#3d3d3d;white-space:nowrap">Tools</div>
<div class="abs tbt" style="left:698px;top:605.5px;width:39.299999999999955px;height:14.5px;border-right:1px solid #c3c7c9;line-height:14.5px;text-align:center;font-size:7.5px;color:#3d3d3d;white-space:nowrap">Lifecycle</div>
<div class="abs tbt" style="left:737.3px;top:605.5px;width:52.700000000000045px;height:14.5px;border-right:1px solid #c3c7c9;line-height:14.5px;text-align:center;font-size:7.5px;color:#3d3d3d;white-space:nowrap">Marketplace</div>
<div class="abs tbt" style="left:790px;top:605.5px;width:27.5px;height:14.5px;background:#f3f3f3;border-right:1px solid #c3c7c9;line-height:14.5px;text-align:center;font-size:7.5px;color:#3d3d3d;white-space:nowrap">View</div>
<svg class="abs" style="left:399px;top:606px" width="5" height="5" viewBox="0 0 5 5"><path d="M0 0 H4.4 L0 4.4Z" fill="#3d8fce"/></svg>
<div class="abs" style="left:299.3px;top:619.3px;width:607.5px;height:30.5px;background:linear-gradient(#f3f3f3 0,#f3f3f3 80%,#f8f8f8 100%);border:1px solid #cfd3d5;border-bottom:none;border-radius:3px 0 0 0"></div>
<div class="abs" style="left:311px;top:620px;width:1px;height:29px;background:#d4d7d9"></div>
<svg class="abs" style="left:301.5px;top:621.5px" width="8" height="6" viewBox="0 0 8 6"><path d="M1 1.4 L4 4.2 L7 1.4" fill="none" stroke="#55585a" stroke-width=".8"/></svg>
<div class="abs" style="left:585.6px;top:619.5px;width:1px;height:30px;background:#c6cacd"></div>
<div class="abs" style="left:441.8px;top:623px;width:1px;height:23px;background:#d2d5d7"></div>
<div class="abs" style="left:471.9px;top:623px;width:1px;height:23px;background:#d2d5d7"></div>
<div class="abs" style="left:501.2px;top:623px;width:1px;height:23px;background:#d2d5d7"></div>
<div class="abs" style="left:555.7px;top:623px;width:1px;height:23px;background:#d2d5d7"></div>
<div class="abs" style="left:742.9px;top:623px;width:1px;height:23px;background:#d2d5d7"></div>
<div class="abs" style="left:822.5px;top:623px;width:1px;height:23px;background:#d2d5d7"></div>
<svg class="abs" style="left:316.5px;top:624.5px" width="19" height="19" viewBox="0 0 19 19"><path d="M5.6 4 L9.6 2 L12.4 3.4 L12.6 8.6 L17.4 10.8 Q18.2 11.4 18 12.4 L17.8 14.6 L10.6 18.4 L3.8 14.8 L3.6 5.6Z" fill="#f4f4f4" stroke="#2b3035" stroke-width="1.1" stroke-linejoin="round"/><path d="M3.8 14.6 L3.8 6 L8.6 8.2 L8.8 12.6 L13 14.8 V18 L10.6 18.2Z" fill="#dcdcdc"/><path d="M3.8 6 L8.6 8.2 L8.8 12.6 L13 14.8 M8.6 8.2 L12.4 6 M13 14.8 L17.8 12 M13 14.8 V17.6" fill="none" stroke="#7d8286" stroke-width=".7"/><path d="M3.6 .6 V7.4 M.2 4 H7 M1.2 1.6 L6 6.4 M6 1.6 L1.2 6.4" stroke="#2d7fb0" stroke-width="1.5"/><path d="M18 14.6 V18 H14.6Z" fill="#222"/></svg>
<svg class="abs" style="left:342.3px;top:624.5px" width="19" height="19" viewBox="0 0 19 19"><path d="M4.6 4.6 L8.8 2.2 L12.4 3.4 L12.6 8.6 L17 10.8 Q17.8 11.4 17.6 12.4 L17.4 14.6 L10.2 18.4 L3.2 14.8 L3 6.6Z" fill="#f0f0f0" stroke="#2b3035" stroke-width="1.1" stroke-linejoin="round"/><path d="M3.2 14.6 L3.2 7 L8.4 8.6 L8.6 12.6 L12.8 14.8 V18 L10.2 18.2Z" fill="#dadada"/><path d="M3.2 7 L8.4 8.6 L8.6 12.6 L12.8 14.8 M8.4 8.6 L12.4 6 M12.8 14.8 L17.4 12 M12.8 14.8 V17.6" fill="none" stroke="#7d8286" stroke-width=".7"/><path d="M10.4 1.6 H17.4 V10.4 C16.4 8 15.4 6.8 13.8 6.4 V8.2 L9.8 4.6 L13.8 1.8" fill="#8d9297" stroke="#6a6f74" stroke-width=".5"/></svg>
<svg class="abs" style="left:367.0px;top:624.5px" width="19" height="19" viewBox="0 0 19 19"><rect x="1" y="1.4" width="16.4" height="16.4" rx="1.6" fill="#2d7fb0" stroke="#1d5a80" stroke-width=".8"/><rect x="3.8" y="2.4" width="10.6" height="7.6" fill="#d9dcde"/><path d="M4 4.4 H14 M4 6.4 H14 M4 8.4 H14" stroke="#b9bdc0" stroke-width=".6"/><rect x="5" y="12" width="8.4" height="5.4" fill="#3d4348"/><rect x="6.2" y="13" width="2.4" height="4" fill="#9fd0ea"/><path d="M1.2 2 L3.6 2 V17" fill="none" stroke="#7fc3e6" stroke-width=".7"/></svg>
<svg class="abs" style="left:392.3px;top:624.5px" width="19" height="19" viewBox="0 0 19 19"><rect x="1" y="1.4" width="16.4" height="16.4" rx="1.6" fill="#2d7fb0" stroke="#1d5a80" stroke-width=".8"/><rect x="3.8" y="2.4" width="10.6" height="7.6" fill="#d9dcde"/><path d="M4 4 H14" stroke="#7fc3e6" stroke-width="1"/><rect x="5" y="12" width="8.4" height="5.4" fill="#3d4348"/><rect x="6.2" y="13" width="2.4" height="4" fill="#9fd0ea"/><path d="M9 3.6 L11.4 2.6 L18 11.6 L15.6 13.4Z" fill="#2a6f9c" stroke="#22303a" stroke-width=".8"/><path d="M15.6 13.4 L18 11.6 L18.6 14.6Z" fill="#e8e8e8" stroke="#22303a" stroke-width=".6"/><path d="M18 14.6 V18 H14.6Z" fill="#222"/></svg>
<svg class="abs" style="left:417.5px;top:624.5px" width="19" height="19" viewBox="0 0 19 19"><g fill="#2d7fb0" stroke="#1d5a80" stroke-width=".6" stroke-linejoin="round"><path d="M2 8 C2 5 4 3 7 2.4 L7.6 5.2 C6 5.6 5 6.6 4.8 8 L6.4 8 L3.4 11 L.6 8Z"/><path d="M10.6 1.6 C13.6 1.8 15.8 3.6 16.4 6.4 L13.6 7 C13.2 5.6 12.2 4.8 10.8 4.6 L10.8 6.2 L7.8 3.2 L10.6 .4Z" /><path d="M17 10.4 C17 13.4 15 15.4 12 16 L11.4 13.2 C13 12.8 14 11.8 14.2 10.4 L12.6 10.4 L15.6 7.4 L18.4 10.4Z"/><path d="M8.4 16.8 C5.4 16.6 3.2 14.8 2.6 12 L5.4 11.4 C5.8 12.8 6.8 13.6 8.2 13.8 L8.2 12.2 L11.2 15.2 L8.4 18Z"/></g><path d="M18 14.6 V18 H14.6Z" fill="#222"/></svg>
<svg class="abs" style="left:446.9px;top:624.5px" width="19" height="19" viewBox="0 0 19 19"><rect x="7.4" y="1" width="9" height="7.4" fill="#fafafa" stroke="#2b3035" stroke-width=".9"/><rect x="8.6" y="3.4" width="6.6" height="3.6" fill="#55595d"/><rect x="2" y="9" width="9.6" height="7.6" fill="#fafafa" stroke="#2b3035" stroke-width=".9"/><rect x="3.2" y="11.2" width="7.2" height="3.6" fill="#55595d"/><path d="M2 17.4 H11.6" stroke="#2d7fb0" stroke-width="1.6"/><path d="M2.4 8 C2.4 5.4 4 4.4 6 4.4 M4.6 2.4 L6.6 4.4 L4.6 6.4" fill="none" stroke="#2b3035" stroke-width="1.1"/><path d="M16.4 10.6 C16.4 13.4 15 14.4 13 14.4 M14.4 12.4 L12.6 14.4 L14.4 16.4" fill="none" stroke="#2b3035" stroke-width="1.1"/></svg>
<svg class="abs" style="left:477.0px;top:624.5px" width="19" height="19" viewBox="0 0 19 19"><path d="M8.0 1.3 L10.8 1.3 L10.9 3.4 L12.7 4.1 L14.2 2.7 L16.3 4.8 L14.9 6.3 L15.6 8.1 L17.7 8.2 L17.7 11.0 L15.6 11.1 L14.9 12.9 L16.3 14.4 L14.2 16.5 L12.7 15.1 L10.9 15.8 L10.8 17.9 L8.0 17.9 L7.9 15.8 L6.1 15.1 L4.6 16.5 L2.5 14.4 L3.9 12.9 L3.2 11.1 L1.1 11.0 L1.1 8.2 L3.2 8.1 L3.9 6.3 L2.5 4.8 L4.6 2.7 L6.1 4.1 L7.9 3.4Z" fill="#fafafa" stroke="#4a4e52" stroke-width=".9" stroke-linejoin="round"/><circle cx="9.4" cy="9.6" r="3" fill="#f3f3f3" stroke="#4a4e52" stroke-width=".9"/><path d="M18 14.6 V18 H14.6Z" fill="#222"/></svg>
<svg class="abs" style="left:506.3px;top:624.5px" width="19" height="19" viewBox="0 0 19 19"><path d="M5.4 8.2 C8 4.6 13.6 4 16.4 8 C18.8 11.6 16.4 16.6 11.4 18.4 L10 15.6 C13.4 14 14.6 11.4 13.4 9.6 C12 7.6 9.4 8.2 7.8 10.2Z" fill="#2d7fb0" stroke="#1d5a80" stroke-width=".5"/><path d="M1.4 3.8 L11.2 5.4 L4.3 12.2Z" fill="#3d93c8" stroke="#1d5a80" stroke-width=".5"/></svg>
<svg class="abs" style="left:529.5px;top:624.5px" width="19" height="19" viewBox="0 0 19 19"><path d="M13.6 8.2 C11 4.6 5.4 4 2.6 8 C.2 11.6 2.6 16.6 7.6 18.4 L9 15.6 C5.6 14 4.4 11.4 5.6 9.6 C7 7.6 9.6 8.2 11.2 10.2Z" fill="#a9d3ea" stroke="#8bbdd8" stroke-width=".5"/><path d="M17.6 3.8 L7.8 5.4 L14.7 12.2Z" fill="#b5daee" stroke="#8bbdd8" stroke-width=".5"/></svg>
<svg class="abs" style="left:562.2px;top:624.5px" width="19" height="19" viewBox="0 0 19 19"><circle cx="8.6" cy="9" r="7.6" fill="#fafafa" stroke="#2b3035" stroke-width="1"/><path d="M6.2 7.2 C6.2 4.2 11.2 4.2 11.2 7.2 C11.2 9 8.7 9 8.7 11" fill="none" stroke="#2d7fb0" stroke-width="1.6"/><circle cx="8.7" cy="13.2" r="1" fill="#2d7fb0"/><path d="M18 14.6 V18 H14.6Z" fill="#222"/></svg>
<svg class="abs" style="left:591.9px;top:624.5px" width="19" height="19" viewBox="0 0 19 19"><path d="M12.6 4.6 A6.4 6.4 0 1 0 11 15.8" fill="none" stroke="#2d7fb0" stroke-width="3"/><path d="M10.6 .6 L16.6 3.6 L11.6 8.2Z" fill="#2d7fb0"/><rect x="9.6" y="10.4" width="8.4" height="7.6" rx=".8" fill="#1d2125"/><path d="M11.4 10.4 V8.6 A2.4 2.4 0 0 1 16.2 8.6 V10.4" fill="none" stroke="#1d2125" stroke-width="1.4"/><circle cx="13.8" cy="13.4" r="1.1" fill="#fff"/><rect x="13.3" y="13.6" width="1" height="2.4" fill="#fff"/></svg>
<svg class="abs" style="left:617.2px;top:624.5px" width="19" height="19" viewBox="0 0 19 19"><circle cx="10.8" cy="7" r="5.6" fill="#fafafa" stroke="#2b3035" stroke-width="1"/><circle cx="10.8" cy="7" r="2.6" fill="none" stroke="#2d7fb0" stroke-width="1" stroke-dasharray="2.2 1.2"/><path d="M7 11 L1.6 16.6" stroke="#2d7fb0" stroke-width="2.6" stroke-linecap="round"/></svg>
<svg class="abs" style="left:642.5px;top:624.5px" width="19" height="19" viewBox="0 0 19 19"><path d="M9.2 .6 L12.4 4.2 H10.4 V7.8 H14 V5.8 L17.8 9 L14 12.2 V10.2 H10.4 V13.8 H12.4 L9.2 17.4 L6 13.8 H8 V10.2 H4.4 V12.2 L.6 9 L4.4 5.8 V7.8 H8 V4.2 H6Z" fill="#2d7fb0" stroke="#1d5a80" stroke-width=".5"/></svg>
<svg class="abs" style="left:668.0px;top:624.5px" width="19" height="19" viewBox="0 0 19 19"><path d="M1.6 6.6 C4 4.6 8 4 12.4 6.4 L15.6 9.6" fill="none" stroke="#2b3035" stroke-width="1"/><path d="M3 8.4 C6 7.6 8 8 10 9.4" fill="none" stroke="#2b3035" stroke-width="1"/><circle cx="11.6" cy="12" r="4.6" fill="#2d7fb0" stroke="#1d3a4c" stroke-width=".9"/><path d="M8.6 9.6 L12.8 13.4 M10 8.2 L14.4 12" stroke="#dfeef7" stroke-width=".8"/><path d="M7 10.6 L11.8 15.8" stroke="#1d3a4c" stroke-width=".8"/></svg>
<svg class="abs" style="left:692.5px;top:624.5px" width="19" height="19" viewBox="0 0 19 19"><circle cx="11.4" cy="7" r="5.8" fill="#f4f9fc" stroke="#2b3035" stroke-width="1"/><path d="M8 11 L3.4 16.4" stroke="#2d7fb0" stroke-width="2.6" stroke-linecap="round"/><path d="M2.4 1.6 V11 M.8 3.6 L2.4 1.4 L4 3.6 M.8 9 L2.4 11.2 L4 9" fill="none" stroke="#2b3035" stroke-width=".9"/></svg>
<div class="abs" style="left:717.3000000000001px;top:623.2px;width:21.4px;height:21.4px;background:#d6e9f6;border:1px solid #7db9e2;border-radius:2.5px"></div>
<svg class="abs" style="left:718.2px;top:624.5px" width="19" height="19" viewBox="0 0 19 19"><path d="M1.6 5.2 L4.6 1.6 H15 Q17 1.6 17 3.6 V12.6 L13.8 16.8 H3.6 Q1.6 16.8 1.6 14.8Z" fill="#2d7fb0" stroke="#1d3a4c" stroke-width="1" stroke-linejoin="round"/><path d="M2.2 5.2 L4.8 2.2 H15 Q16.4 2.2 16.4 3.4 L13.8 5.4 H3Z" fill="#8ccbee"/><path d="M2.2 5.6 H12.4 Q13.6 5.6 13.6 6.8 V16.2 H3.8 Q2.2 16.2 2.2 14.6Z" fill="#4a9fd0"/><path d="M2.2 5.4 H12.4 Q13.8 5.4 13.8 6.8 V16.4 M13.6 5.6 L16.6 3" fill="none" stroke="#c9e6f6" stroke-width=".7"/><path d="M18 14.6 V18 H14.6Z" fill="#222"/></svg>
<svg class="abs" style="left:748.5px;top:624.5px" width="19" height="19" viewBox="0 0 19 19"><path d="M.8 8.4 C4 3.4 13 3.4 16.4 8.4 C13 13 4 13 .8 8.4Z" fill="#fafafa" stroke="#2b3035" stroke-width="1"/><circle cx="8.6" cy="8" r="3.4" fill="#55595d"/><circle cx="8.6" cy="8" r="1.4" fill="#1d2125"/><path d="M9 10.4 H17.6 L14.6 13.8 V17.6 L12 16.4 V13.8Z" fill="#2d7fb0" stroke="#1d5a80" stroke-width=".5"/></svg>
<svg class="abs" style="left:773.1px;top:624.5px" width="19" height="19" viewBox="0 0 19 19"><path d="M2.4 3.6 V14.4 C2.4 17 13 17 13 14.4 V3.6" fill="#2d7fb0" stroke="#1d3a4c" stroke-width=".8"/><ellipse cx="7.7" cy="3.6" rx="5.3" ry="2.2" fill="#5fa9d4" stroke="#1d3a4c" stroke-width=".8"/><circle cx="13.6" cy="13.6" r="3.6" fill="#1d2125"/><circle cx="13.6" cy="13.6" r="1.3" fill="#f3f3f3"/><path d="M13.6 9.2 V18 M9.2 13.6 H18 M10.5 10.5 L16.7 16.7 M16.7 10.5 L10.5 16.7" stroke="#1d2125" stroke-width="1.2"/><circle cx="13.6" cy="13.6" r="1.3" fill="#f3f3f3"/></svg>
<svg class="abs" style="left:798.5px;top:624.5px" width="19" height="19" viewBox="0 0 19 19"><path d="M2 5.4 L8.6 1.2 V17.4 L2 13Z" fill="#2d7fb0" stroke="#1d3a4c" stroke-width=".8"/><path d="M8.6 1.2 L15 5.4 V13 L8.6 17.4Z" fill="#eef5f9" stroke="#2d7fb0" stroke-width=".8" stroke-dasharray="1.4 1"/><circle cx="13.8" cy="13.8" r="3.4" fill="#1d2125"/><path d="M13.8 9.6 V18 M9.6 13.8 H18 M10.8 10.8 L16.8 16.8 M16.8 10.8 L10.8 16.8" stroke="#1d2125" stroke-width="1.2"/><circle cx="13.8" cy="13.8" r="1.3" fill="#f3f3f3"/></svg>
<svg class="abs" style="left:828.0px;top:624.5px" width="19" height="19" viewBox="0 0 19 19"><path d="M1.6 6 C3 3 8 2 11 4.4 V15 C8 13 3.6 14 1.6 17Z" fill="#b9bdc0" stroke="#2b3035" stroke-width=".9"/><path d="M11 4.4 C13 3 15.4 3 17 4.4 V14 C15.4 12.8 13 13 11 15Z" fill="#2d7fb0" stroke="#1d3a4c" stroke-width=".8"/><path d="M3.4 5 V15.4 M5.6 4.2 V14.4 M7.8 3.8 V14 " stroke="#f3f3f3" stroke-width=".7"/><path d="M12.4 5 L16.6 9 M12 8 L16.6 12.4 M13.6 4 L17 7" stroke="#9fd0ea" stroke-width=".6"/><path d="M18 14.6 V18 H14.6Z" fill="#222"/></svg>
<svg class="abs" style="left:853.3px;top:624.5px" width="19" height="19" viewBox="0 0 19 19"><rect x="1.4" y="2" width="14.6" height="11.4" fill="#fafafa" stroke="#2b3035" stroke-width=".9"/><circle cx="4.2" cy="5.4" r="1.4" fill="none" stroke="#2d7fb0" stroke-width=".8"/><circle cx="4.2" cy="10" r="1.4" fill="none" stroke="#2d7fb0" stroke-width=".8"/><path d="M4.2 6.8 V8.6" stroke="#2d7fb0" stroke-width=".7"/><path d="M9 8.6 V4.8 C9 3.6 10.8 3.6 10.8 4.8 V8 L15 9 C16 9.2 16.4 10 16.2 11 L15.4 16.4 H10 L7.2 12 C6.6 11 7.8 10.2 8.6 11Z" fill="#fafafa" stroke="#2b3035" stroke-width=".8" stroke-linejoin="round"/></svg>
<div class="abs" style="left:877.6px;top:623.2px;width:21.4px;height:21.4px;background:#d6e9f6;border:1px solid #7db9e2;border-radius:2.5px"></div>
<svg class="abs" style="left:878.5px;top:624.5px" width="19" height="19" viewBox="0 0 19 19"><rect x="1.4" y="2.4" width="15.6" height="13.4" fill="#fafafa" stroke="#2b3035" stroke-width="1"/><rect x="12" y="3" width="4.6" height="12.2" fill="#2d7fb0"/><path d="M13.2 7 L15.6 9 L13.2 11Z" fill="#1d2125"/><circle cx="6.6" cy="9" r="3.8" fill="#f3f3f3" stroke="#55595d" stroke-width=".9"/><path d="M5.4 7.6 A1.8 1.8 0 1 0 8.2 9.6" fill="none" stroke="#55595d" stroke-width=".9"/></svg><!--/TOOLBAR-->
</body></html>
